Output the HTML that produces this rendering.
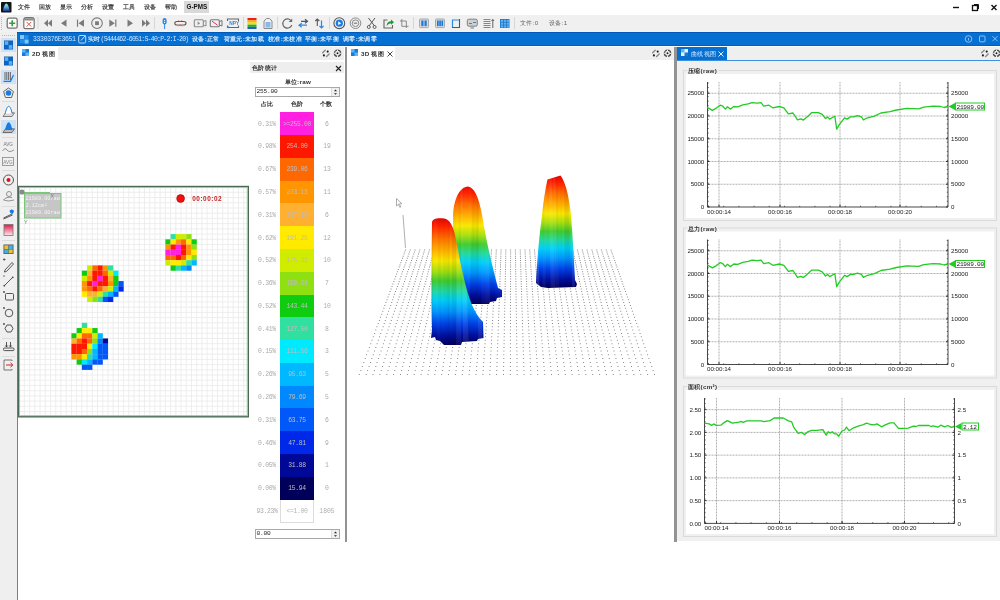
<!DOCTYPE html><html><head><meta charset="utf-8"><style>
*{margin:0;padding:0;box-sizing:border-box}
html,body{width:1000px;height:600px;overflow:hidden;background:#ffffff;font-family:"Liberation Sans",sans-serif;}
.a{position:absolute}
.t{position:absolute;white-space:nowrap;line-height:1;}
#root{position:absolute;left:0;top:0;width:1000px;height:600px;overflow:hidden;background:#ffffff;filter:blur(0.35px);}
</style></head><body><div id="root"><div class="a" style="left:0px;top:0px;width:1000px;height:14px;background:#ffffff"></div><svg class="a" style="left:1px;top:1.5px" width="11" height="11"><rect width="10.5" height="10.5" rx="0.8" fill="#141416"/><defs><linearGradient id="lg" x1="0" y1="0" x2="0" y2="1"><stop offset="0" stop-color="#a0f8a0"/><stop offset="0.45" stop-color="#60b0f0"/><stop offset="1" stop-color="#1a2a80"/></linearGradient></defs><path d="M5.3 1.6 C7 1.8 8.2 6 8.7 9.3 L1.9 9.3 C2.4 6 3.6 1.8 5.3 1.6 Z" fill="url(#lg)"/></svg><div class="t" style="left:18px;top:3.8px;font-size:6.25px;letter-spacing:0.3px;font-weight:600;color:#444">文件</div><div class="t" style="left:39px;top:3.8px;font-size:6.25px;letter-spacing:0.3px;font-weight:600;color:#444">回放</div><div class="t" style="left:60px;top:3.8px;font-size:6.25px;letter-spacing:0.3px;font-weight:600;color:#444">显示</div><div class="t" style="left:81px;top:3.8px;font-size:6.25px;letter-spacing:0.3px;font-weight:600;color:#444">分析</div><div class="t" style="left:102px;top:3.8px;font-size:6.25px;letter-spacing:0.3px;font-weight:600;color:#444">设置</div><div class="t" style="left:123px;top:3.8px;font-size:6.25px;letter-spacing:0.3px;font-weight:600;color:#444">工具</div><div class="t" style="left:144px;top:3.8px;font-size:6.25px;letter-spacing:0.3px;font-weight:600;color:#444">设备</div><div class="t" style="left:165px;top:3.8px;font-size:6.25px;letter-spacing:0.3px;font-weight:600;color:#444">帮助</div><div class="a" style="left:184px;top:1px;width:25px;height:12px;background:#d9d9d9"></div><div class="t" style="left:186.5px;top:4px;font-size:6.3px;font-weight:bold;color:#111">G-PMS</div><svg class="a" style="left:948px;top:2px" width="52" height="11"><path d="M5 5.5h6" stroke="#111" stroke-width="1.4"/><rect x="24.5" y="3.5" width="5" height="5" fill="none" stroke="#111" stroke-width="1.3"/><path d="M26 2.5h4.5v4.5" fill="none" stroke="#111" stroke-width="1"/><path d="M43.5 3l5 5M48.5 3l-5 5" stroke="#111" stroke-width="1.4"/></svg><div class="a" style="left:0px;top:14.5px;width:1000px;height:16.5px;background:#f0f0f0"></div><div class="a" style="left:0px;top:31px;width:1000px;height:1px;background:#f8f0ea"></div><div class="a" style="left:0px;top:32px;width:17px;height:568px;background:#efefef"></div><div class="a" style="left:17px;top:32px;width:983px;height:14px;background:#0670d2;border-top:1px solid #0058b8;border-bottom:1px solid #005ec0"></div><div class="a" style="left:17px;top:46px;width:327px;height:14px;background:#efefef;border-top:1.5px solid #fff"></div><div class="a" style="left:17px;top:46px;width:41px;height:14px;background:#ffffff"></div><div class="a" style="left:17px;top:60px;width:327px;height:481px;background:#ffffff"></div><div class="a" style="left:17px;top:46px;width:1px;height:554px;background:#3a8ee0"></div><div class="a" style="left:344.5px;top:47px;width:2.5px;height:495px;background:#939393"></div><div class="a" style="left:347px;top:46px;width:327px;height:14px;background:#efefef;border-top:1.5px solid #fff"></div><div class="a" style="left:347px;top:46px;width:48px;height:14px;background:#ffffff"></div><div class="a" style="left:347px;top:60px;width:327px;height:481px;background:#ffffff"></div><div class="a" style="left:674px;top:47px;width:2.5px;height:495px;background:#939393"></div><div class="a" style="left:677px;top:46px;width:323px;height:14px;background:#efefef;border-top:1.5px solid #fff"></div><div class="a" style="left:677px;top:47px;width:50px;height:14px;background:#0670d2"></div><div class="a" style="left:677px;top:60px;width:323px;height:1.5px;background:#3d8fe0"></div><div class="a" style="left:677px;top:61px;width:323px;height:480px;background:#f0f0f0"></div><svg class="a" style="left:22px;top:49px" width="8" height="8"><rect width="7" height="7" fill="#1a7ad8"/><rect x="0" y="0" width="3.5" height="3.5" fill="#5ab8f8"/><rect x="3.5" y="3.5" width="3.5" height="3.5" fill="#5ab8f8"/></svg><div class="t" style="left:32px;top:51px;font-size:6.25px;letter-spacing:0.2px;font-weight:600;color:#333">2D 视图</div><svg class="a" style="left:0;top:0" width="260" height="430"><line x1="19.20" y1="186" x2="19.20" y2="417" stroke="#eaeaea" stroke-width="0.8"/><line x1="18" y1="187.10" x2="248" y2="187.10" stroke="#eaeaea" stroke-width="0.8"/><line x1="24.42" y1="186" x2="24.42" y2="417" stroke="#eaeaea" stroke-width="0.8"/><line x1="18" y1="192.32" x2="248" y2="192.32" stroke="#eaeaea" stroke-width="0.8"/><line x1="29.64" y1="186" x2="29.64" y2="417" stroke="#eaeaea" stroke-width="0.8"/><line x1="18" y1="197.54" x2="248" y2="197.54" stroke="#eaeaea" stroke-width="0.8"/><line x1="34.86" y1="186" x2="34.86" y2="417" stroke="#eaeaea" stroke-width="0.8"/><line x1="18" y1="202.76" x2="248" y2="202.76" stroke="#eaeaea" stroke-width="0.8"/><line x1="40.08" y1="186" x2="40.08" y2="417" stroke="#eaeaea" stroke-width="0.8"/><line x1="18" y1="207.98" x2="248" y2="207.98" stroke="#eaeaea" stroke-width="0.8"/><line x1="45.30" y1="186" x2="45.30" y2="417" stroke="#eaeaea" stroke-width="0.8"/><line x1="18" y1="213.20" x2="248" y2="213.20" stroke="#eaeaea" stroke-width="0.8"/><line x1="50.52" y1="186" x2="50.52" y2="417" stroke="#eaeaea" stroke-width="0.8"/><line x1="18" y1="218.42" x2="248" y2="218.42" stroke="#eaeaea" stroke-width="0.8"/><line x1="55.74" y1="186" x2="55.74" y2="417" stroke="#eaeaea" stroke-width="0.8"/><line x1="18" y1="223.64" x2="248" y2="223.64" stroke="#eaeaea" stroke-width="0.8"/><line x1="60.96" y1="186" x2="60.96" y2="417" stroke="#eaeaea" stroke-width="0.8"/><line x1="18" y1="228.86" x2="248" y2="228.86" stroke="#eaeaea" stroke-width="0.8"/><line x1="66.18" y1="186" x2="66.18" y2="417" stroke="#eaeaea" stroke-width="0.8"/><line x1="18" y1="234.08" x2="248" y2="234.08" stroke="#eaeaea" stroke-width="0.8"/><line x1="71.40" y1="186" x2="71.40" y2="417" stroke="#eaeaea" stroke-width="0.8"/><line x1="18" y1="239.30" x2="248" y2="239.30" stroke="#eaeaea" stroke-width="0.8"/><line x1="76.62" y1="186" x2="76.62" y2="417" stroke="#eaeaea" stroke-width="0.8"/><line x1="18" y1="244.52" x2="248" y2="244.52" stroke="#eaeaea" stroke-width="0.8"/><line x1="81.84" y1="186" x2="81.84" y2="417" stroke="#eaeaea" stroke-width="0.8"/><line x1="18" y1="249.74" x2="248" y2="249.74" stroke="#eaeaea" stroke-width="0.8"/><line x1="87.06" y1="186" x2="87.06" y2="417" stroke="#eaeaea" stroke-width="0.8"/><line x1="18" y1="254.96" x2="248" y2="254.96" stroke="#eaeaea" stroke-width="0.8"/><line x1="92.28" y1="186" x2="92.28" y2="417" stroke="#eaeaea" stroke-width="0.8"/><line x1="18" y1="260.18" x2="248" y2="260.18" stroke="#eaeaea" stroke-width="0.8"/><line x1="97.50" y1="186" x2="97.50" y2="417" stroke="#eaeaea" stroke-width="0.8"/><line x1="18" y1="265.40" x2="248" y2="265.40" stroke="#eaeaea" stroke-width="0.8"/><line x1="102.72" y1="186" x2="102.72" y2="417" stroke="#eaeaea" stroke-width="0.8"/><line x1="18" y1="270.62" x2="248" y2="270.62" stroke="#eaeaea" stroke-width="0.8"/><line x1="107.94" y1="186" x2="107.94" y2="417" stroke="#eaeaea" stroke-width="0.8"/><line x1="18" y1="275.84" x2="248" y2="275.84" stroke="#eaeaea" stroke-width="0.8"/><line x1="113.16" y1="186" x2="113.16" y2="417" stroke="#eaeaea" stroke-width="0.8"/><line x1="18" y1="281.06" x2="248" y2="281.06" stroke="#eaeaea" stroke-width="0.8"/><line x1="118.38" y1="186" x2="118.38" y2="417" stroke="#eaeaea" stroke-width="0.8"/><line x1="18" y1="286.28" x2="248" y2="286.28" stroke="#eaeaea" stroke-width="0.8"/><line x1="123.60" y1="186" x2="123.60" y2="417" stroke="#eaeaea" stroke-width="0.8"/><line x1="18" y1="291.50" x2="248" y2="291.50" stroke="#eaeaea" stroke-width="0.8"/><line x1="128.82" y1="186" x2="128.82" y2="417" stroke="#eaeaea" stroke-width="0.8"/><line x1="18" y1="296.72" x2="248" y2="296.72" stroke="#eaeaea" stroke-width="0.8"/><line x1="134.04" y1="186" x2="134.04" y2="417" stroke="#eaeaea" stroke-width="0.8"/><line x1="18" y1="301.94" x2="248" y2="301.94" stroke="#eaeaea" stroke-width="0.8"/><line x1="139.26" y1="186" x2="139.26" y2="417" stroke="#eaeaea" stroke-width="0.8"/><line x1="18" y1="307.16" x2="248" y2="307.16" stroke="#eaeaea" stroke-width="0.8"/><line x1="144.48" y1="186" x2="144.48" y2="417" stroke="#eaeaea" stroke-width="0.8"/><line x1="18" y1="312.38" x2="248" y2="312.38" stroke="#eaeaea" stroke-width="0.8"/><line x1="149.70" y1="186" x2="149.70" y2="417" stroke="#eaeaea" stroke-width="0.8"/><line x1="18" y1="317.60" x2="248" y2="317.60" stroke="#eaeaea" stroke-width="0.8"/><line x1="154.92" y1="186" x2="154.92" y2="417" stroke="#eaeaea" stroke-width="0.8"/><line x1="18" y1="322.82" x2="248" y2="322.82" stroke="#eaeaea" stroke-width="0.8"/><line x1="160.14" y1="186" x2="160.14" y2="417" stroke="#eaeaea" stroke-width="0.8"/><line x1="18" y1="328.04" x2="248" y2="328.04" stroke="#eaeaea" stroke-width="0.8"/><line x1="165.36" y1="186" x2="165.36" y2="417" stroke="#eaeaea" stroke-width="0.8"/><line x1="18" y1="333.26" x2="248" y2="333.26" stroke="#eaeaea" stroke-width="0.8"/><line x1="170.58" y1="186" x2="170.58" y2="417" stroke="#eaeaea" stroke-width="0.8"/><line x1="18" y1="338.48" x2="248" y2="338.48" stroke="#eaeaea" stroke-width="0.8"/><line x1="175.80" y1="186" x2="175.80" y2="417" stroke="#eaeaea" stroke-width="0.8"/><line x1="18" y1="343.70" x2="248" y2="343.70" stroke="#eaeaea" stroke-width="0.8"/><line x1="181.02" y1="186" x2="181.02" y2="417" stroke="#eaeaea" stroke-width="0.8"/><line x1="18" y1="348.92" x2="248" y2="348.92" stroke="#eaeaea" stroke-width="0.8"/><line x1="186.24" y1="186" x2="186.24" y2="417" stroke="#eaeaea" stroke-width="0.8"/><line x1="18" y1="354.14" x2="248" y2="354.14" stroke="#eaeaea" stroke-width="0.8"/><line x1="191.46" y1="186" x2="191.46" y2="417" stroke="#eaeaea" stroke-width="0.8"/><line x1="18" y1="359.36" x2="248" y2="359.36" stroke="#eaeaea" stroke-width="0.8"/><line x1="196.68" y1="186" x2="196.68" y2="417" stroke="#eaeaea" stroke-width="0.8"/><line x1="18" y1="364.58" x2="248" y2="364.58" stroke="#eaeaea" stroke-width="0.8"/><line x1="201.90" y1="186" x2="201.90" y2="417" stroke="#eaeaea" stroke-width="0.8"/><line x1="18" y1="369.80" x2="248" y2="369.80" stroke="#eaeaea" stroke-width="0.8"/><line x1="207.12" y1="186" x2="207.12" y2="417" stroke="#eaeaea" stroke-width="0.8"/><line x1="18" y1="375.02" x2="248" y2="375.02" stroke="#eaeaea" stroke-width="0.8"/><line x1="212.34" y1="186" x2="212.34" y2="417" stroke="#eaeaea" stroke-width="0.8"/><line x1="18" y1="380.24" x2="248" y2="380.24" stroke="#eaeaea" stroke-width="0.8"/><line x1="217.56" y1="186" x2="217.56" y2="417" stroke="#eaeaea" stroke-width="0.8"/><line x1="18" y1="385.46" x2="248" y2="385.46" stroke="#eaeaea" stroke-width="0.8"/><line x1="222.78" y1="186" x2="222.78" y2="417" stroke="#eaeaea" stroke-width="0.8"/><line x1="18" y1="390.68" x2="248" y2="390.68" stroke="#eaeaea" stroke-width="0.8"/><line x1="228.00" y1="186" x2="228.00" y2="417" stroke="#eaeaea" stroke-width="0.8"/><line x1="18" y1="395.90" x2="248" y2="395.90" stroke="#eaeaea" stroke-width="0.8"/><line x1="233.22" y1="186" x2="233.22" y2="417" stroke="#eaeaea" stroke-width="0.8"/><line x1="18" y1="401.12" x2="248" y2="401.12" stroke="#eaeaea" stroke-width="0.8"/><line x1="238.44" y1="186" x2="238.44" y2="417" stroke="#eaeaea" stroke-width="0.8"/><line x1="18" y1="406.34" x2="248" y2="406.34" stroke="#eaeaea" stroke-width="0.8"/><line x1="243.66" y1="186" x2="243.66" y2="417" stroke="#eaeaea" stroke-width="0.8"/><line x1="18" y1="411.56" x2="248" y2="411.56" stroke="#eaeaea" stroke-width="0.8"/><line x1="18" y1="416.78" x2="248" y2="416.78" stroke="#eaeaea" stroke-width="0.8"/><rect x="170.58" y="234.08" width="5.32" height="5.32" fill="#30e0a0"/><rect x="175.80" y="234.08" width="5.32" height="5.32" fill="#d0ec00"/><rect x="181.02" y="234.08" width="5.32" height="5.32" fill="#d0ec00"/><rect x="186.24" y="234.08" width="5.32" height="5.32" fill="#8fe010"/><rect x="165.36" y="239.30" width="5.32" height="5.32" fill="#10cc10"/><rect x="170.58" y="239.30" width="5.32" height="5.32" fill="#ffea00"/><rect x="175.80" y="239.30" width="5.32" height="5.32" fill="#ff9500"/><rect x="181.02" y="239.30" width="5.32" height="5.32" fill="#ff6800"/><rect x="186.24" y="239.30" width="5.32" height="5.32" fill="#ffea00"/><rect x="191.46" y="239.30" width="5.32" height="5.32" fill="#10cc10"/><rect x="165.36" y="244.52" width="5.32" height="5.32" fill="#ff9500"/><rect x="170.58" y="244.52" width="5.32" height="5.32" fill="#ff1800"/><rect x="175.80" y="244.52" width="5.32" height="5.32" fill="#ff20e0"/><rect x="181.02" y="244.52" width="5.32" height="5.32" fill="#ff1800"/><rect x="186.24" y="244.52" width="5.32" height="5.32" fill="#ff9500"/><rect x="191.46" y="244.52" width="5.32" height="5.32" fill="#8fe010"/><rect x="165.36" y="249.74" width="5.32" height="5.32" fill="#ff20e0"/><rect x="170.58" y="249.74" width="5.32" height="5.32" fill="#ff20e0"/><rect x="175.80" y="249.74" width="5.32" height="5.32" fill="#ff20e0"/><rect x="181.02" y="249.74" width="5.32" height="5.32" fill="#ff1800"/><rect x="186.24" y="249.74" width="5.32" height="5.32" fill="#ff9500"/><rect x="191.46" y="249.74" width="5.32" height="5.32" fill="#ffea00"/><rect x="165.36" y="254.96" width="5.32" height="5.32" fill="#ff6800"/><rect x="170.58" y="254.96" width="5.32" height="5.32" fill="#ff6800"/><rect x="175.80" y="254.96" width="5.32" height="5.32" fill="#ff1800"/><rect x="181.02" y="254.96" width="5.32" height="5.32" fill="#ff6800"/><rect x="186.24" y="254.96" width="5.32" height="5.32" fill="#ffea00"/><rect x="191.46" y="254.96" width="5.32" height="5.32" fill="#8fe010"/><rect x="165.36" y="260.18" width="5.32" height="5.32" fill="#d0ec00"/><rect x="170.58" y="260.18" width="5.32" height="5.32" fill="#ffea00"/><rect x="175.80" y="260.18" width="5.32" height="5.32" fill="#ffea00"/><rect x="181.02" y="260.18" width="5.32" height="5.32" fill="#d0ec00"/><rect x="186.24" y="260.18" width="5.32" height="5.32" fill="#30e0a0"/><rect x="191.46" y="260.18" width="5.32" height="5.32" fill="#00b8ff"/><rect x="170.58" y="265.40" width="5.32" height="5.32" fill="#10cc10"/><rect x="175.80" y="265.40" width="5.32" height="5.32" fill="#30e0a0"/><rect x="181.02" y="265.40" width="5.32" height="5.32" fill="#00b8ff"/><rect x="186.24" y="265.40" width="5.32" height="5.32" fill="#0088ff"/><rect x="87.06" y="265.40" width="5.32" height="5.32" fill="#d0ec00"/><rect x="92.28" y="265.40" width="5.32" height="5.32" fill="#ff6800"/><rect x="97.50" y="265.40" width="5.32" height="5.32" fill="#ff1800"/><rect x="102.72" y="265.40" width="5.32" height="5.32" fill="#ff9500"/><rect x="107.94" y="265.40" width="5.32" height="5.32" fill="#30e0a0"/><rect x="81.84" y="270.62" width="5.32" height="5.32" fill="#10cc10"/><rect x="87.06" y="270.62" width="5.32" height="5.32" fill="#ffb030"/><rect x="92.28" y="270.62" width="5.32" height="5.32" fill="#ff1800"/><rect x="97.50" y="270.62" width="5.32" height="5.32" fill="#ff1800"/><rect x="102.72" y="270.62" width="5.32" height="5.32" fill="#ff6800"/><rect x="107.94" y="270.62" width="5.32" height="5.32" fill="#d0ec00"/><rect x="113.16" y="270.62" width="5.32" height="5.32" fill="#00eaff"/><rect x="81.84" y="275.84" width="5.32" height="5.32" fill="#d0ec00"/><rect x="87.06" y="275.84" width="5.32" height="5.32" fill="#ff9500"/><rect x="92.28" y="275.84" width="5.32" height="5.32" fill="#ff1800"/><rect x="97.50" y="275.84" width="5.32" height="5.32" fill="#ff20e0"/><rect x="102.72" y="275.84" width="5.32" height="5.32" fill="#ff1800"/><rect x="107.94" y="275.84" width="5.32" height="5.32" fill="#ffb030"/><rect x="113.16" y="275.84" width="5.32" height="5.32" fill="#10cc10"/><rect x="81.84" y="281.06" width="5.32" height="5.32" fill="#ff9500"/><rect x="87.06" y="281.06" width="5.32" height="5.32" fill="#ff1800"/><rect x="92.28" y="281.06" width="5.32" height="5.32" fill="#ff20e0"/><rect x="97.50" y="281.06" width="5.32" height="5.32" fill="#ff1800"/><rect x="102.72" y="281.06" width="5.32" height="5.32" fill="#ff1800"/><rect x="107.94" y="281.06" width="5.32" height="5.32" fill="#ff9500"/><rect x="113.16" y="281.06" width="5.32" height="5.32" fill="#10cc10"/><rect x="118.38" y="281.06" width="5.32" height="5.32" fill="#0058f8"/><rect x="81.84" y="286.28" width="5.32" height="5.32" fill="#ff9500"/><rect x="87.06" y="286.28" width="5.32" height="5.32" fill="#ff6800"/><rect x="92.28" y="286.28" width="5.32" height="5.32" fill="#ff1800"/><rect x="97.50" y="286.28" width="5.32" height="5.32" fill="#ff6800"/><rect x="102.72" y="286.28" width="5.32" height="5.32" fill="#ffb030"/><rect x="107.94" y="286.28" width="5.32" height="5.32" fill="#d0ec00"/><rect x="113.16" y="286.28" width="5.32" height="5.32" fill="#00b8ff"/><rect x="118.38" y="286.28" width="5.32" height="5.32" fill="#0028e8"/><rect x="81.84" y="291.50" width="5.32" height="5.32" fill="#ffea00"/><rect x="87.06" y="291.50" width="5.32" height="5.32" fill="#ffb030"/><rect x="92.28" y="291.50" width="5.32" height="5.32" fill="#ffb030"/><rect x="97.50" y="291.50" width="5.32" height="5.32" fill="#d0ec00"/><rect x="102.72" y="291.50" width="5.32" height="5.32" fill="#30e0a0"/><rect x="107.94" y="291.50" width="5.32" height="5.32" fill="#00b8ff"/><rect x="113.16" y="291.50" width="5.32" height="5.32" fill="#0058f8"/><rect x="87.06" y="296.72" width="5.32" height="5.32" fill="#d0ec00"/><rect x="92.28" y="296.72" width="5.32" height="5.32" fill="#8fe010"/><rect x="97.50" y="296.72" width="5.32" height="5.32" fill="#30e0a0"/><rect x="102.72" y="296.72" width="5.32" height="5.32" fill="#0058f8"/><rect x="107.94" y="296.72" width="5.32" height="5.32" fill="#0028e8"/><rect x="81.84" y="322.82" width="5.32" height="5.32" fill="#30e0a0"/><rect x="76.62" y="328.04" width="5.32" height="5.32" fill="#10cc10"/><rect x="81.84" y="328.04" width="5.32" height="5.32" fill="#ffea00"/><rect x="87.06" y="328.04" width="5.32" height="5.32" fill="#ffea00"/><rect x="92.28" y="328.04" width="5.32" height="5.32" fill="#10cc10"/><rect x="71.40" y="333.26" width="5.32" height="5.32" fill="#10cc10"/><rect x="76.62" y="333.26" width="5.32" height="5.32" fill="#ffea00"/><rect x="81.84" y="333.26" width="5.32" height="5.32" fill="#ff6800"/><rect x="87.06" y="333.26" width="5.32" height="5.32" fill="#ff6800"/><rect x="92.28" y="333.26" width="5.32" height="5.32" fill="#d0ec00"/><rect x="97.50" y="333.26" width="5.32" height="5.32" fill="#00b8ff"/><rect x="71.40" y="338.48" width="5.32" height="5.32" fill="#ffb030"/><rect x="76.62" y="338.48" width="5.32" height="5.32" fill="#ff6800"/><rect x="81.84" y="338.48" width="5.32" height="5.32" fill="#ff1800"/><rect x="87.06" y="338.48" width="5.32" height="5.32" fill="#ff6800"/><rect x="92.28" y="338.48" width="5.32" height="5.32" fill="#8fe010"/><rect x="97.50" y="338.48" width="5.32" height="5.32" fill="#0088ff"/><rect x="102.72" y="338.48" width="5.32" height="5.32" fill="#000898"/><rect x="71.40" y="343.70" width="5.32" height="5.32" fill="#ff1800"/><rect x="76.62" y="343.70" width="5.32" height="5.32" fill="#ff1800"/><rect x="81.84" y="343.70" width="5.32" height="5.32" fill="#ff1800"/><rect x="87.06" y="343.70" width="5.32" height="5.32" fill="#ffea00"/><rect x="92.28" y="343.70" width="5.32" height="5.32" fill="#00eaff"/><rect x="97.50" y="343.70" width="5.32" height="5.32" fill="#0058f8"/><rect x="102.72" y="343.70" width="5.32" height="5.32" fill="#0058f8"/><rect x="71.40" y="348.92" width="5.32" height="5.32" fill="#ff1800"/><rect x="76.62" y="348.92" width="5.32" height="5.32" fill="#ff1800"/><rect x="81.84" y="348.92" width="5.32" height="5.32" fill="#ff6800"/><rect x="87.06" y="348.92" width="5.32" height="5.32" fill="#8fe010"/><rect x="92.28" y="348.92" width="5.32" height="5.32" fill="#00b8ff"/><rect x="97.50" y="348.92" width="5.32" height="5.32" fill="#0058f8"/><rect x="102.72" y="348.92" width="5.32" height="5.32" fill="#0058f8"/><rect x="71.40" y="354.14" width="5.32" height="5.32" fill="#ff9500"/><rect x="76.62" y="354.14" width="5.32" height="5.32" fill="#ff9500"/><rect x="81.84" y="354.14" width="5.32" height="5.32" fill="#ffea00"/><rect x="87.06" y="354.14" width="5.32" height="5.32" fill="#30e0a0"/><rect x="92.28" y="354.14" width="5.32" height="5.32" fill="#00b8ff"/><rect x="97.50" y="354.14" width="5.32" height="5.32" fill="#0058f8"/><rect x="102.72" y="354.14" width="5.32" height="5.32" fill="#0058f8"/><rect x="76.62" y="359.36" width="5.32" height="5.32" fill="#10cc10"/><rect x="81.84" y="359.36" width="5.32" height="5.32" fill="#00eaff"/><rect x="87.06" y="359.36" width="5.32" height="5.32" fill="#00b8ff"/><rect x="92.28" y="359.36" width="5.32" height="5.32" fill="#0058f8"/><rect x="97.50" y="359.36" width="5.32" height="5.32" fill="#0058f8"/><rect x="81.84" y="364.58" width="5.32" height="5.32" fill="#0058f8"/><rect x="87.06" y="364.58" width="5.32" height="5.32" fill="#0058f8"/><rect x="18.5" y="186.5" width="229.8" height="230.3" fill="none" stroke="#4a6a55" stroke-width="1.4"/><rect x="19.6" y="187.6" width="227.6" height="228" fill="none" stroke="#80d890" stroke-width="0.9"/><rect x="24.5" y="193.5" width="36.5" height="24.5" fill="#c6c6c6" stroke="#78c878" stroke-width="1"/><line x1="22" y1="192.5" x2="50" y2="192.5" stroke="#78c878" stroke-width="1"/><circle cx="22" cy="192" r="2.6" fill="#8a8a8a"/><text x="25.5" y="199.5" font-family="Liberation Mono" font-size="5.2" fill="#f4f4f4">21989.00raw</text><text x="25.5" y="206.7" font-family="Liberation Mono" font-size="5.2" fill="#f4f4f4">2.12cm²</text><text x="25.5" y="213.9" font-family="Liberation Mono" font-size="5.2" fill="#f4f4f4">21989.00raw</text><text x="50.5" y="198" font-family="Liberation Sans" font-size="5" fill="#777">X</text><text x="24" y="224" font-family="Liberation Sans" font-size="5.5" fill="#777">Y</text><circle cx="180.6" cy="198.5" r="3.9" fill="#f01010" stroke="#a00000" stroke-width="0.6"/><text x="192.2" y="201.3" font-family="Liberation Sans" font-size="6.4" font-weight="bold" fill="#c02020" letter-spacing="0.55">00:00:02</text></svg><svg class="a" style="left:322px;top:48px" width="22" height="11"><path d="M0.6 4.8 L3.2 2.2 M4.6 8.6 L7.2 6" stroke="#8c8c8c" stroke-width="1.4" stroke-linecap="round"/><circle cx="5.7" cy="3.6" r="1.05" fill="#1a1a1a"/><circle cx="1.9" cy="7.4" r="1.05" fill="#1a1a1a"/><circle cx="15.5" cy="5.3" r="3.1" fill="none" stroke="#4a4a4a" stroke-width="1.3"/><path d="M15.5 1.6 V3.3 M15.5 7.3 V9 M11.8 5.3 H13.5 M17.5 5.3 H19.2" stroke="#efefef" stroke-width="1"/><circle cx="15.5" cy="5.3" r="0.95" fill="#1a1a1a"/></svg><div class="a" style="left:250px;top:62px;width:94px;height:11px;background:#eeeeee"></div><div class="t" style="left:252px;top:64.5px;font-size:6.25px;letter-spacing:0.3px;font-weight:600;color:#333">色阶统计</div><svg class="a" style="left:335px;top:65px" width="7" height="7"><path d="M1 1l5 5M6 1l-5 5" stroke="#222" stroke-width="1.1"/></svg><div class="t" style="left:284.5px;top:78.5px;font-size:6.25px;letter-spacing:0.3px;font-weight:600;color:#333">单位:raw</div><div class="a" style="left:255px;top:87px;width:85px;height:10px;border:1px solid #a8a8a8;background:#fff"></div><div class="a" style="left:331px;top:88px;width:8px;height:8px;background:#f0f0f0;border-left:1px solid #ddd"></div><svg class="a" style="left:332px;top:88px" width="7" height="8"><path d="M2 3.2L3.5 1.6L5 3.2Z M2 5.2L3.5 6.8L5 5.2Z" fill="#222"/></svg><div class="t" style="left:256.5px;top:89.3px;font-size:6.2px;font-family:'Liberation Mono';color:#222;letter-spacing:-0.2px">255.00</div><div class="t" style="left:261px;top:100.5px;font-size:6.25px;letter-spacing:0.3px;font-weight:600;color:#333">占比</div><div class="t" style="left:291px;top:100.5px;font-size:6.25px;letter-spacing:0.3px;font-weight:600;color:#333">色阶</div><div class="t" style="left:320px;top:100.5px;font-size:6.25px;letter-spacing:0.3px;font-weight:600;color:#333">个数</div><div class="a" style="left:280px;top:112.20px;width:34px;height:22.99px;background:#ff20e0"></div><div class="t" style="left:249px;width:36px;top:121.59px;text-align:center;font-family:'Liberation Mono';font-size:6.4px;color:#ababab;letter-spacing:-0.25px">0.31%</div><div class="t" style="left:279px;width:36px;top:121.59px;text-align:center;font-family:'Liberation Mono';font-size:6.4px;color:#bdbdbd;letter-spacing:-0.35px">&gt;=255.00</div><div class="t" style="left:314px;width:26px;top:121.59px;text-align:center;font-family:'Liberation Mono';font-size:6.4px;color:#ababab">6</div><div class="a" style="left:280px;top:134.99px;width:34px;height:22.99px;background:#ff1800"></div><div class="t" style="left:249px;width:36px;top:144.39px;text-align:center;font-family:'Liberation Mono';font-size:6.4px;color:#ababab;letter-spacing:-0.25px">0.98%</div><div class="t" style="left:279px;width:36px;top:144.39px;text-align:center;font-family:'Liberation Mono';font-size:6.4px;color:#bdbdbd;letter-spacing:-0.35px">254.00</div><div class="t" style="left:314px;width:26px;top:144.39px;text-align:center;font-family:'Liberation Mono';font-size:6.4px;color:#ababab">19</div><div class="a" style="left:280px;top:157.78px;width:34px;height:22.99px;background:#ff6800"></div><div class="t" style="left:249px;width:36px;top:167.18px;text-align:center;font-family:'Liberation Mono';font-size:6.4px;color:#ababab;letter-spacing:-0.25px">0.67%</div><div class="t" style="left:279px;width:36px;top:167.18px;text-align:center;font-family:'Liberation Mono';font-size:6.4px;color:#bdbdbd;letter-spacing:-0.35px">239.06</div><div class="t" style="left:314px;width:26px;top:167.18px;text-align:center;font-family:'Liberation Mono';font-size:6.4px;color:#ababab">13</div><div class="a" style="left:280px;top:180.57px;width:34px;height:22.99px;background:#ff9500"></div><div class="t" style="left:249px;width:36px;top:189.97px;text-align:center;font-family:'Liberation Mono';font-size:6.4px;color:#ababab;letter-spacing:-0.25px">0.57%</div><div class="t" style="left:279px;width:36px;top:189.97px;text-align:center;font-family:'Liberation Mono';font-size:6.4px;color:#bdbdbd;letter-spacing:-0.35px">223.13</div><div class="t" style="left:314px;width:26px;top:189.97px;text-align:center;font-family:'Liberation Mono';font-size:6.4px;color:#ababab">11</div><div class="a" style="left:280px;top:203.36px;width:34px;height:22.99px;background:#ffb030"></div><div class="t" style="left:249px;width:36px;top:212.76px;text-align:center;font-family:'Liberation Mono';font-size:6.4px;color:#ababab;letter-spacing:-0.25px">0.31%</div><div class="t" style="left:279px;width:36px;top:212.76px;text-align:center;font-family:'Liberation Mono';font-size:6.4px;color:#bdbdbd;letter-spacing:-0.35px">207.19</div><div class="t" style="left:314px;width:26px;top:212.76px;text-align:center;font-family:'Liberation Mono';font-size:6.4px;color:#ababab">6</div><div class="a" style="left:280px;top:226.15px;width:34px;height:22.99px;background:#ffea00"></div><div class="t" style="left:249px;width:36px;top:235.54px;text-align:center;font-family:'Liberation Mono';font-size:6.4px;color:#ababab;letter-spacing:-0.25px">0.62%</div><div class="t" style="left:279px;width:36px;top:235.54px;text-align:center;font-family:'Liberation Mono';font-size:6.4px;color:#bdbdbd;letter-spacing:-0.35px">191.25</div><div class="t" style="left:314px;width:26px;top:235.54px;text-align:center;font-family:'Liberation Mono';font-size:6.4px;color:#ababab">12</div><div class="a" style="left:280px;top:248.94px;width:34px;height:22.99px;background:#d0ec00"></div><div class="t" style="left:249px;width:36px;top:258.33px;text-align:center;font-family:'Liberation Mono';font-size:6.4px;color:#ababab;letter-spacing:-0.25px">0.52%</div><div class="t" style="left:279px;width:36px;top:258.33px;text-align:center;font-family:'Liberation Mono';font-size:6.4px;color:#bdbdbd;letter-spacing:-0.35px">175.31</div><div class="t" style="left:314px;width:26px;top:258.33px;text-align:center;font-family:'Liberation Mono';font-size:6.4px;color:#ababab">10</div><div class="a" style="left:280px;top:271.73px;width:34px;height:22.99px;background:#8fe010"></div><div class="t" style="left:249px;width:36px;top:281.12px;text-align:center;font-family:'Liberation Mono';font-size:6.4px;color:#ababab;letter-spacing:-0.25px">0.36%</div><div class="t" style="left:279px;width:36px;top:281.12px;text-align:center;font-family:'Liberation Mono';font-size:6.4px;color:#bdbdbd;letter-spacing:-0.35px">159.38</div><div class="t" style="left:314px;width:26px;top:281.12px;text-align:center;font-family:'Liberation Mono';font-size:6.4px;color:#ababab">7</div><div class="a" style="left:280px;top:294.52px;width:34px;height:22.99px;background:#10cc10"></div><div class="t" style="left:249px;width:36px;top:303.91px;text-align:center;font-family:'Liberation Mono';font-size:6.4px;color:#ababab;letter-spacing:-0.25px">0.52%</div><div class="t" style="left:279px;width:36px;top:303.91px;text-align:center;font-family:'Liberation Mono';font-size:6.4px;color:#bdbdbd;letter-spacing:-0.35px">143.44</div><div class="t" style="left:314px;width:26px;top:303.91px;text-align:center;font-family:'Liberation Mono';font-size:6.4px;color:#ababab">10</div><div class="a" style="left:280px;top:317.31px;width:34px;height:22.99px;background:#30e0a0"></div><div class="t" style="left:249px;width:36px;top:326.70px;text-align:center;font-family:'Liberation Mono';font-size:6.4px;color:#ababab;letter-spacing:-0.25px">0.41%</div><div class="t" style="left:279px;width:36px;top:326.70px;text-align:center;font-family:'Liberation Mono';font-size:6.4px;color:#bdbdbd;letter-spacing:-0.35px">127.50</div><div class="t" style="left:314px;width:26px;top:326.70px;text-align:center;font-family:'Liberation Mono';font-size:6.4px;color:#ababab">8</div><div class="a" style="left:280px;top:340.10px;width:34px;height:22.99px;background:#00eaff"></div><div class="t" style="left:249px;width:36px;top:349.49px;text-align:center;font-family:'Liberation Mono';font-size:6.4px;color:#ababab;letter-spacing:-0.25px">0.15%</div><div class="t" style="left:279px;width:36px;top:349.49px;text-align:center;font-family:'Liberation Mono';font-size:6.4px;color:#bdbdbd;letter-spacing:-0.35px">111.56</div><div class="t" style="left:314px;width:26px;top:349.49px;text-align:center;font-family:'Liberation Mono';font-size:6.4px;color:#ababab">3</div><div class="a" style="left:280px;top:362.89px;width:34px;height:22.99px;background:#00b8ff"></div><div class="t" style="left:249px;width:36px;top:372.28px;text-align:center;font-family:'Liberation Mono';font-size:6.4px;color:#ababab;letter-spacing:-0.25px">0.26%</div><div class="t" style="left:279px;width:36px;top:372.28px;text-align:center;font-family:'Liberation Mono';font-size:6.4px;color:#bdbdbd;letter-spacing:-0.35px">95.63</div><div class="t" style="left:314px;width:26px;top:372.28px;text-align:center;font-family:'Liberation Mono';font-size:6.4px;color:#ababab">5</div><div class="a" style="left:280px;top:385.68px;width:34px;height:22.99px;background:#0088ff"></div><div class="t" style="left:249px;width:36px;top:395.07px;text-align:center;font-family:'Liberation Mono';font-size:6.4px;color:#ababab;letter-spacing:-0.25px">0.26%</div><div class="t" style="left:279px;width:36px;top:395.07px;text-align:center;font-family:'Liberation Mono';font-size:6.4px;color:#bdbdbd;letter-spacing:-0.35px">79.69</div><div class="t" style="left:314px;width:26px;top:395.07px;text-align:center;font-family:'Liberation Mono';font-size:6.4px;color:#ababab">5</div><div class="a" style="left:280px;top:408.47px;width:34px;height:22.99px;background:#0058f8"></div><div class="t" style="left:249px;width:36px;top:417.86px;text-align:center;font-family:'Liberation Mono';font-size:6.4px;color:#ababab;letter-spacing:-0.25px">0.31%</div><div class="t" style="left:279px;width:36px;top:417.86px;text-align:center;font-family:'Liberation Mono';font-size:6.4px;color:#bdbdbd;letter-spacing:-0.35px">63.75</div><div class="t" style="left:314px;width:26px;top:417.86px;text-align:center;font-family:'Liberation Mono';font-size:6.4px;color:#ababab">6</div><div class="a" style="left:280px;top:431.26px;width:34px;height:22.99px;background:#0028e8"></div><div class="t" style="left:249px;width:36px;top:440.65px;text-align:center;font-family:'Liberation Mono';font-size:6.4px;color:#ababab;letter-spacing:-0.25px">0.46%</div><div class="t" style="left:279px;width:36px;top:440.65px;text-align:center;font-family:'Liberation Mono';font-size:6.4px;color:#bdbdbd;letter-spacing:-0.35px">47.81</div><div class="t" style="left:314px;width:26px;top:440.65px;text-align:center;font-family:'Liberation Mono';font-size:6.4px;color:#ababab">9</div><div class="a" style="left:280px;top:454.05px;width:34px;height:22.99px;background:#000898"></div><div class="t" style="left:249px;width:36px;top:463.44px;text-align:center;font-family:'Liberation Mono';font-size:6.4px;color:#ababab;letter-spacing:-0.25px">0.05%</div><div class="t" style="left:279px;width:36px;top:463.44px;text-align:center;font-family:'Liberation Mono';font-size:6.4px;color:#bdbdbd;letter-spacing:-0.35px">31.88</div><div class="t" style="left:314px;width:26px;top:463.44px;text-align:center;font-family:'Liberation Mono';font-size:6.4px;color:#ababab">1</div><div class="a" style="left:280px;top:476.84px;width:34px;height:22.99px;background:#00005a"></div><div class="t" style="left:249px;width:36px;top:486.23px;text-align:center;font-family:'Liberation Mono';font-size:6.4px;color:#ababab;letter-spacing:-0.25px">0.00%</div><div class="t" style="left:279px;width:36px;top:486.23px;text-align:center;font-family:'Liberation Mono';font-size:6.4px;color:#bdbdbd;letter-spacing:-0.35px">15.94</div><div class="t" style="left:314px;width:26px;top:486.23px;text-align:center;font-family:'Liberation Mono';font-size:6.4px;color:#ababab">0</div><div class="a" style="left:280px;top:499.63px;width:34px;height:23.5px;background:#fff;border:1px solid #dcdcdc;border-top:none"></div><div class="t" style="left:249px;width:36px;top:509.02px;text-align:center;font-family:'Liberation Mono';font-size:6.4px;color:#ababab;letter-spacing:-0.35px">93.23%</div><div class="t" style="left:279px;width:36px;top:509.02px;text-align:center;font-family:'Liberation Mono';font-size:6.4px;color:#b4b4b4;letter-spacing:-0.35px">&lt;=1.00</div><div class="t" style="left:314px;width:26px;top:509.02px;text-align:center;font-family:'Liberation Mono';font-size:6.4px;color:#ababab">1805</div><div class="a" style="left:255px;top:529px;width:85px;height:10px;border:1px solid #a8a8a8;background:#fff"></div><div class="a" style="left:331px;top:530px;width:8px;height:8px;background:#f0f0f0;border-left:1px solid #ddd"></div><svg class="a" style="left:332px;top:530px" width="7" height="8"><path d="M2 3.2L3.5 1.6L5 3.2Z M2 5.2L3.5 6.8L5 5.2Z" fill="#222"/></svg><div class="t" style="left:256.5px;top:531.3px;font-size:6.2px;font-family:'Liberation Mono';color:#222;letter-spacing:-0.2px">0.00</div><svg class="a" style="left:351px;top:49px" width="8" height="8"><rect width="7" height="7" fill="#1a7ad8"/><rect x="0" y="0" width="3.5" height="3.5" fill="#5ab8f8"/><rect x="3.5" y="3.5" width="3.5" height="3.5" fill="#5ab8f8"/></svg><div class="t" style="left:361px;top:51px;font-size:6.25px;letter-spacing:0.2px;font-weight:600;color:#333">3D 视图</div><svg class="a" style="left:386px;top:50px" width="8" height="8"><path d="M1.5 1.5l5 5M6.5 1.5l-5 5" stroke="#333" stroke-width="0.9"/></svg><svg class="a" style="left:652px;top:48px" width="22" height="11"><path d="M0.6 4.8 L3.2 2.2 M4.6 8.6 L7.2 6" stroke="#8c8c8c" stroke-width="1.4" stroke-linecap="round"/><circle cx="5.7" cy="3.6" r="1.05" fill="#1a1a1a"/><circle cx="1.9" cy="7.4" r="1.05" fill="#1a1a1a"/><circle cx="15.5" cy="5.3" r="3.1" fill="none" stroke="#4a4a4a" stroke-width="1.3"/><path d="M15.5 1.6 V3.3 M15.5 7.3 V9 M11.8 5.3 H13.5 M17.5 5.3 H19.2" stroke="#efefef" stroke-width="1"/><circle cx="15.5" cy="5.3" r="0.95" fill="#1a1a1a"/></svg><svg class="a" style="left:347px;top:60px" width="327" height="481" viewBox="347 60 327 481"><path d="M405.0 249.5h1v1h-1zM409.8 249.5h1v1h-1zM414.6 249.5h1v1h-1zM419.3 249.5h1v1h-1zM424.1 249.5h1v1h-1zM428.9 249.5h1v1h-1zM433.7 249.5h1v1h-1zM438.5 249.5h1v1h-1zM443.2 249.5h1v1h-1zM448.0 249.5h1v1h-1zM452.8 249.5h1v1h-1zM457.6 249.5h1v1h-1zM462.3 249.5h1v1h-1zM467.1 249.5h1v1h-1zM471.9 249.5h1v1h-1zM476.7 249.5h1v1h-1zM481.5 249.5h1v1h-1zM486.2 249.5h1v1h-1zM491.0 249.5h1v1h-1zM495.8 249.5h1v1h-1zM500.6 249.5h1v1h-1zM505.4 249.5h1v1h-1zM510.1 249.5h1v1h-1zM514.9 249.5h1v1h-1zM519.7 249.5h1v1h-1zM524.5 249.5h1v1h-1zM529.3 249.5h1v1h-1zM534.0 249.5h1v1h-1zM538.8 249.5h1v1h-1zM543.6 249.5h1v1h-1zM548.4 249.5h1v1h-1zM553.2 249.5h1v1h-1zM557.9 249.5h1v1h-1zM562.7 249.5h1v1h-1zM567.5 249.5h1v1h-1zM572.3 249.5h1v1h-1zM577.0 249.5h1v1h-1zM581.8 249.5h1v1h-1zM586.6 249.5h1v1h-1zM591.4 249.5h1v1h-1zM596.2 249.5h1v1h-1zM600.9 249.5h1v1h-1zM605.7 249.5h1v1h-1zM610.5 249.5h1v1h-1zM404.2 251.5h1v1h-1zM409.1 251.5h1v1h-1zM413.9 251.5h1v1h-1zM418.7 251.5h1v1h-1zM423.5 251.5h1v1h-1zM428.3 251.5h1v1h-1zM433.1 251.5h1v1h-1zM437.9 251.5h1v1h-1zM442.8 251.5h1v1h-1zM447.6 251.5h1v1h-1zM452.4 251.5h1v1h-1zM457.2 251.5h1v1h-1zM462.0 251.5h1v1h-1zM466.8 251.5h1v1h-1zM471.6 251.5h1v1h-1zM476.4 251.5h1v1h-1zM481.3 251.5h1v1h-1zM486.1 251.5h1v1h-1zM490.9 251.5h1v1h-1zM495.7 251.5h1v1h-1zM500.5 251.5h1v1h-1zM505.3 251.5h1v1h-1zM510.1 251.5h1v1h-1zM514.9 251.5h1v1h-1zM519.8 251.5h1v1h-1zM524.6 251.5h1v1h-1zM529.4 251.5h1v1h-1zM534.2 251.5h1v1h-1zM539.0 251.5h1v1h-1zM543.8 251.5h1v1h-1zM548.6 251.5h1v1h-1zM553.5 251.5h1v1h-1zM558.3 251.5h1v1h-1zM563.1 251.5h1v1h-1zM567.9 251.5h1v1h-1zM572.7 251.5h1v1h-1zM577.5 251.5h1v1h-1zM582.3 251.5h1v1h-1zM587.1 251.5h1v1h-1zM592.0 251.5h1v1h-1zM596.8 251.5h1v1h-1zM601.6 251.5h1v1h-1zM606.4 251.5h1v1h-1zM611.2 251.5h1v1h-1zM403.5 253.6h1v1h-1zM408.3 253.6h1v1h-1zM413.2 253.6h1v1h-1zM418.0 253.6h1v1h-1zM422.9 253.6h1v1h-1zM427.7 253.6h1v1h-1zM432.6 253.6h1v1h-1zM437.4 253.6h1v1h-1zM442.3 253.6h1v1h-1zM447.1 253.6h1v1h-1zM452.0 253.6h1v1h-1zM456.8 253.6h1v1h-1zM461.7 253.6h1v1h-1zM466.5 253.6h1v1h-1zM471.3 253.6h1v1h-1zM476.2 253.6h1v1h-1zM481.0 253.6h1v1h-1zM485.9 253.6h1v1h-1zM490.7 253.6h1v1h-1zM495.6 253.6h1v1h-1zM500.4 253.6h1v1h-1zM505.3 253.6h1v1h-1zM510.1 253.6h1v1h-1zM515.0 253.6h1v1h-1zM519.8 253.6h1v1h-1zM524.7 253.6h1v1h-1zM529.5 253.6h1v1h-1zM534.4 253.6h1v1h-1zM539.2 253.6h1v1h-1zM544.1 253.6h1v1h-1zM548.9 253.6h1v1h-1zM553.8 253.6h1v1h-1zM558.6 253.6h1v1h-1zM563.5 253.6h1v1h-1zM568.3 253.6h1v1h-1zM573.1 253.6h1v1h-1zM578.0 253.6h1v1h-1zM582.8 253.6h1v1h-1zM587.7 253.6h1v1h-1zM592.5 253.6h1v1h-1zM597.4 253.6h1v1h-1zM602.2 253.6h1v1h-1zM607.1 253.6h1v1h-1zM611.9 253.6h1v1h-1zM402.7 255.7h1v1h-1zM407.6 255.7h1v1h-1zM412.5 255.7h1v1h-1zM417.4 255.7h1v1h-1zM422.2 255.7h1v1h-1zM427.1 255.7h1v1h-1zM432.0 255.7h1v1h-1zM436.9 255.7h1v1h-1zM441.8 255.7h1v1h-1zM446.6 255.7h1v1h-1zM451.5 255.7h1v1h-1zM456.4 255.7h1v1h-1zM461.3 255.7h1v1h-1zM466.2 255.7h1v1h-1zM471.1 255.7h1v1h-1zM475.9 255.7h1v1h-1zM480.8 255.7h1v1h-1zM485.7 255.7h1v1h-1zM490.6 255.7h1v1h-1zM495.5 255.7h1v1h-1zM500.4 255.7h1v1h-1zM505.2 255.7h1v1h-1zM510.1 255.7h1v1h-1zM515.0 255.7h1v1h-1zM519.9 255.7h1v1h-1zM524.8 255.7h1v1h-1zM529.7 255.7h1v1h-1zM534.5 255.7h1v1h-1zM539.4 255.7h1v1h-1zM544.3 255.7h1v1h-1zM549.2 255.7h1v1h-1zM554.1 255.7h1v1h-1zM559.0 255.7h1v1h-1zM563.8 255.7h1v1h-1zM568.7 255.7h1v1h-1zM573.6 255.7h1v1h-1zM578.5 255.7h1v1h-1zM583.4 255.7h1v1h-1zM588.2 255.7h1v1h-1zM593.1 255.7h1v1h-1zM598.0 255.7h1v1h-1zM602.9 255.7h1v1h-1zM607.8 255.7h1v1h-1zM612.7 255.7h1v1h-1zM401.9 257.8h1v1h-1zM406.8 257.8h1v1h-1zM411.8 257.8h1v1h-1zM416.7 257.8h1v1h-1zM421.6 257.8h1v1h-1zM426.5 257.8h1v1h-1zM431.4 257.8h1v1h-1zM436.3 257.8h1v1h-1zM441.3 257.8h1v1h-1zM446.2 257.8h1v1h-1zM451.1 257.8h1v1h-1zM456.0 257.8h1v1h-1zM460.9 257.8h1v1h-1zM465.9 257.8h1v1h-1zM470.8 257.8h1v1h-1zM475.7 257.8h1v1h-1zM480.6 257.8h1v1h-1zM485.5 257.8h1v1h-1zM490.4 257.8h1v1h-1zM495.4 257.8h1v1h-1zM500.3 257.8h1v1h-1zM505.2 257.8h1v1h-1zM510.1 257.8h1v1h-1zM515.0 257.8h1v1h-1zM520.0 257.8h1v1h-1zM524.9 257.8h1v1h-1zM529.8 257.8h1v1h-1zM534.7 257.8h1v1h-1zM539.6 257.8h1v1h-1zM544.5 257.8h1v1h-1zM549.5 257.8h1v1h-1zM554.4 257.8h1v1h-1zM559.3 257.8h1v1h-1zM564.2 257.8h1v1h-1zM569.1 257.8h1v1h-1zM574.1 257.8h1v1h-1zM579.0 257.8h1v1h-1zM583.9 257.8h1v1h-1zM588.8 257.8h1v1h-1zM593.7 257.8h1v1h-1zM598.6 257.8h1v1h-1zM603.6 257.8h1v1h-1zM608.5 257.8h1v1h-1zM613.4 257.8h1v1h-1zM401.1 260.0h1v1h-1zM406.1 260.0h1v1h-1zM411.0 260.0h1v1h-1zM416.0 260.0h1v1h-1zM420.9 260.0h1v1h-1zM425.9 260.0h1v1h-1zM430.8 260.0h1v1h-1zM435.8 260.0h1v1h-1zM440.8 260.0h1v1h-1zM445.7 260.0h1v1h-1zM450.7 260.0h1v1h-1zM455.6 260.0h1v1h-1zM460.6 260.0h1v1h-1zM465.5 260.0h1v1h-1zM470.5 260.0h1v1h-1zM475.4 260.0h1v1h-1zM480.4 260.0h1v1h-1zM485.3 260.0h1v1h-1zM490.3 260.0h1v1h-1zM495.3 260.0h1v1h-1zM500.2 260.0h1v1h-1zM505.2 260.0h1v1h-1zM510.1 260.0h1v1h-1zM515.1 260.0h1v1h-1zM520.0 260.0h1v1h-1zM525.0 260.0h1v1h-1zM529.9 260.0h1v1h-1zM534.9 260.0h1v1h-1zM539.8 260.0h1v1h-1zM544.8 260.0h1v1h-1zM549.7 260.0h1v1h-1zM554.7 260.0h1v1h-1zM559.7 260.0h1v1h-1zM564.6 260.0h1v1h-1zM569.6 260.0h1v1h-1zM574.5 260.0h1v1h-1zM579.5 260.0h1v1h-1zM584.4 260.0h1v1h-1zM589.4 260.0h1v1h-1zM594.3 260.0h1v1h-1zM599.3 260.0h1v1h-1zM604.2 260.0h1v1h-1zM609.2 260.0h1v1h-1zM614.2 260.0h1v1h-1zM400.3 262.2h1v1h-1zM405.3 262.2h1v1h-1zM410.3 262.2h1v1h-1zM415.3 262.2h1v1h-1zM420.3 262.2h1v1h-1zM425.3 262.2h1v1h-1zM430.3 262.2h1v1h-1zM435.2 262.2h1v1h-1zM440.2 262.2h1v1h-1zM445.2 262.2h1v1h-1zM450.2 262.2h1v1h-1zM455.2 262.2h1v1h-1zM460.2 262.2h1v1h-1zM465.2 262.2h1v1h-1zM470.2 262.2h1v1h-1zM475.2 262.2h1v1h-1zM480.2 262.2h1v1h-1zM485.2 262.2h1v1h-1zM490.1 262.2h1v1h-1zM495.1 262.2h1v1h-1zM500.1 262.2h1v1h-1zM505.1 262.2h1v1h-1zM510.1 262.2h1v1h-1zM515.1 262.2h1v1h-1zM520.1 262.2h1v1h-1zM525.1 262.2h1v1h-1zM530.1 262.2h1v1h-1zM535.1 262.2h1v1h-1zM540.1 262.2h1v1h-1zM545.0 262.2h1v1h-1zM550.0 262.2h1v1h-1zM555.0 262.2h1v1h-1zM560.0 262.2h1v1h-1zM565.0 262.2h1v1h-1zM570.0 262.2h1v1h-1zM575.0 262.2h1v1h-1zM580.0 262.2h1v1h-1zM585.0 262.2h1v1h-1zM590.0 262.2h1v1h-1zM595.0 262.2h1v1h-1zM599.9 262.2h1v1h-1zM604.9 262.2h1v1h-1zM609.9 262.2h1v1h-1zM614.9 262.2h1v1h-1zM399.5 264.4h1v1h-1zM404.5 264.4h1v1h-1zM409.5 264.4h1v1h-1zM414.6 264.4h1v1h-1zM419.6 264.4h1v1h-1zM424.6 264.4h1v1h-1zM429.7 264.4h1v1h-1zM434.7 264.4h1v1h-1zM439.7 264.4h1v1h-1zM444.7 264.4h1v1h-1zM449.8 264.4h1v1h-1zM454.8 264.4h1v1h-1zM459.8 264.4h1v1h-1zM464.9 264.4h1v1h-1zM469.9 264.4h1v1h-1zM474.9 264.4h1v1h-1zM479.9 264.4h1v1h-1zM485.0 264.4h1v1h-1zM490.0 264.4h1v1h-1zM495.0 264.4h1v1h-1zM500.0 264.4h1v1h-1zM505.1 264.4h1v1h-1zM510.1 264.4h1v1h-1zM515.1 264.4h1v1h-1zM520.2 264.4h1v1h-1zM525.2 264.4h1v1h-1zM530.2 264.4h1v1h-1zM535.2 264.4h1v1h-1zM540.3 264.4h1v1h-1zM545.3 264.4h1v1h-1zM550.3 264.4h1v1h-1zM555.4 264.4h1v1h-1zM560.4 264.4h1v1h-1zM565.4 264.4h1v1h-1zM570.4 264.4h1v1h-1zM575.5 264.4h1v1h-1zM580.5 264.4h1v1h-1zM585.5 264.4h1v1h-1zM590.6 264.4h1v1h-1zM595.6 264.4h1v1h-1zM600.6 264.4h1v1h-1zM605.6 264.4h1v1h-1zM610.7 264.4h1v1h-1zM615.7 264.4h1v1h-1zM398.7 266.6h1v1h-1zM403.7 266.6h1v1h-1zM408.8 266.6h1v1h-1zM413.8 266.6h1v1h-1zM418.9 266.6h1v1h-1zM424.0 266.6h1v1h-1zM429.0 266.6h1v1h-1zM434.1 266.6h1v1h-1zM439.2 266.6h1v1h-1zM444.2 266.6h1v1h-1zM449.3 266.6h1v1h-1zM454.4 266.6h1v1h-1zM459.4 266.6h1v1h-1zM464.5 266.6h1v1h-1zM469.6 266.6h1v1h-1zM474.6 266.6h1v1h-1zM479.7 266.6h1v1h-1zM484.8 266.6h1v1h-1zM489.8 266.6h1v1h-1zM494.9 266.6h1v1h-1zM500.0 266.6h1v1h-1zM505.0 266.6h1v1h-1zM510.1 266.6h1v1h-1zM515.2 266.6h1v1h-1zM520.2 266.6h1v1h-1zM525.3 266.6h1v1h-1zM530.4 266.6h1v1h-1zM535.4 266.6h1v1h-1zM540.5 266.6h1v1h-1zM545.6 266.6h1v1h-1zM550.6 266.6h1v1h-1zM555.7 266.6h1v1h-1zM560.8 266.6h1v1h-1zM565.8 266.6h1v1h-1zM570.9 266.6h1v1h-1zM576.0 266.6h1v1h-1zM581.0 266.6h1v1h-1zM586.1 266.6h1v1h-1zM591.1 266.6h1v1h-1zM596.2 266.6h1v1h-1zM601.3 266.6h1v1h-1zM606.3 266.6h1v1h-1zM611.4 266.6h1v1h-1zM616.5 266.6h1v1h-1zM397.8 268.9h1v1h-1zM402.9 268.9h1v1h-1zM408.0 268.9h1v1h-1zM413.1 268.9h1v1h-1zM418.2 268.9h1v1h-1zM423.3 268.9h1v1h-1zM428.4 268.9h1v1h-1zM433.5 268.9h1v1h-1zM438.6 268.9h1v1h-1zM443.7 268.9h1v1h-1zM448.8 268.9h1v1h-1zM453.9 268.9h1v1h-1zM459.1 268.9h1v1h-1zM464.2 268.9h1v1h-1zM469.3 268.9h1v1h-1zM474.4 268.9h1v1h-1zM479.5 268.9h1v1h-1zM484.6 268.9h1v1h-1zM489.7 268.9h1v1h-1zM494.8 268.9h1v1h-1zM499.9 268.9h1v1h-1zM505.0 268.9h1v1h-1zM510.1 268.9h1v1h-1zM515.2 268.9h1v1h-1zM520.3 268.9h1v1h-1zM525.4 268.9h1v1h-1zM530.5 268.9h1v1h-1zM535.6 268.9h1v1h-1zM540.7 268.9h1v1h-1zM545.8 268.9h1v1h-1zM550.9 268.9h1v1h-1zM556.0 268.9h1v1h-1zM561.1 268.9h1v1h-1zM566.2 268.9h1v1h-1zM571.3 268.9h1v1h-1zM576.4 268.9h1v1h-1zM581.5 268.9h1v1h-1zM586.7 268.9h1v1h-1zM591.8 268.9h1v1h-1zM596.9 268.9h1v1h-1zM602.0 268.9h1v1h-1zM607.1 268.9h1v1h-1zM612.2 268.9h1v1h-1zM617.3 268.9h1v1h-1zM396.9 271.2h1v1h-1zM402.1 271.2h1v1h-1zM407.2 271.2h1v1h-1zM412.4 271.2h1v1h-1zM417.5 271.2h1v1h-1zM422.7 271.2h1v1h-1zM427.8 271.2h1v1h-1zM432.9 271.2h1v1h-1zM438.1 271.2h1v1h-1zM443.2 271.2h1v1h-1zM448.4 271.2h1v1h-1zM453.5 271.2h1v1h-1zM458.7 271.2h1v1h-1zM463.8 271.2h1v1h-1zM468.9 271.2h1v1h-1zM474.1 271.2h1v1h-1zM479.2 271.2h1v1h-1zM484.4 271.2h1v1h-1zM489.5 271.2h1v1h-1zM494.7 271.2h1v1h-1zM499.8 271.2h1v1h-1zM504.9 271.2h1v1h-1zM510.1 271.2h1v1h-1zM515.2 271.2h1v1h-1zM520.4 271.2h1v1h-1zM525.5 271.2h1v1h-1zM530.7 271.2h1v1h-1zM535.8 271.2h1v1h-1zM540.9 271.2h1v1h-1zM546.1 271.2h1v1h-1zM551.2 271.2h1v1h-1zM556.4 271.2h1v1h-1zM561.5 271.2h1v1h-1zM566.7 271.2h1v1h-1zM571.8 271.2h1v1h-1zM576.9 271.2h1v1h-1zM582.1 271.2h1v1h-1zM587.2 271.2h1v1h-1zM592.4 271.2h1v1h-1zM597.5 271.2h1v1h-1zM602.7 271.2h1v1h-1zM607.8 271.2h1v1h-1zM612.9 271.2h1v1h-1zM618.1 271.2h1v1h-1zM396.1 273.6h1v1h-1zM401.3 273.6h1v1h-1zM406.4 273.6h1v1h-1zM411.6 273.6h1v1h-1zM416.8 273.6h1v1h-1zM422.0 273.6h1v1h-1zM427.2 273.6h1v1h-1zM432.3 273.6h1v1h-1zM437.5 273.6h1v1h-1zM442.7 273.6h1v1h-1zM447.9 273.6h1v1h-1zM453.1 273.6h1v1h-1zM458.3 273.6h1v1h-1zM463.4 273.6h1v1h-1zM468.6 273.6h1v1h-1zM473.8 273.6h1v1h-1zM479.0 273.6h1v1h-1zM484.2 273.6h1v1h-1zM489.4 273.6h1v1h-1zM494.5 273.6h1v1h-1zM499.7 273.6h1v1h-1zM504.9 273.6h1v1h-1zM510.1 273.6h1v1h-1zM515.3 273.6h1v1h-1zM520.4 273.6h1v1h-1zM525.6 273.6h1v1h-1zM530.8 273.6h1v1h-1zM536.0 273.6h1v1h-1zM541.2 273.6h1v1h-1zM546.4 273.6h1v1h-1zM551.5 273.6h1v1h-1zM556.7 273.6h1v1h-1zM561.9 273.6h1v1h-1zM567.1 273.6h1v1h-1zM572.3 273.6h1v1h-1zM577.4 273.6h1v1h-1zM582.6 273.6h1v1h-1zM587.8 273.6h1v1h-1zM593.0 273.6h1v1h-1zM598.2 273.6h1v1h-1zM603.4 273.6h1v1h-1zM608.5 273.6h1v1h-1zM613.7 273.6h1v1h-1zM618.9 273.6h1v1h-1zM395.2 276.0h1v1h-1zM400.4 276.0h1v1h-1zM405.6 276.0h1v1h-1zM410.9 276.0h1v1h-1zM416.1 276.0h1v1h-1zM421.3 276.0h1v1h-1zM426.5 276.0h1v1h-1zM431.7 276.0h1v1h-1zM437.0 276.0h1v1h-1zM442.2 276.0h1v1h-1zM447.4 276.0h1v1h-1zM452.6 276.0h1v1h-1zM457.9 276.0h1v1h-1zM463.1 276.0h1v1h-1zM468.3 276.0h1v1h-1zM473.5 276.0h1v1h-1zM478.7 276.0h1v1h-1zM484.0 276.0h1v1h-1zM489.2 276.0h1v1h-1zM494.4 276.0h1v1h-1zM499.6 276.0h1v1h-1zM504.9 276.0h1v1h-1zM510.1 276.0h1v1h-1zM515.3 276.0h1v1h-1zM520.5 276.0h1v1h-1zM525.7 276.0h1v1h-1zM531.0 276.0h1v1h-1zM536.2 276.0h1v1h-1zM541.4 276.0h1v1h-1zM546.6 276.0h1v1h-1zM551.9 276.0h1v1h-1zM557.1 276.0h1v1h-1zM562.3 276.0h1v1h-1zM567.5 276.0h1v1h-1zM572.7 276.0h1v1h-1zM578.0 276.0h1v1h-1zM583.2 276.0h1v1h-1zM588.4 276.0h1v1h-1zM593.6 276.0h1v1h-1zM598.9 276.0h1v1h-1zM604.1 276.0h1v1h-1zM609.3 276.0h1v1h-1zM614.5 276.0h1v1h-1zM619.7 276.0h1v1h-1zM394.3 278.4h1v1h-1zM399.5 278.4h1v1h-1zM404.8 278.4h1v1h-1zM410.1 278.4h1v1h-1zM415.3 278.4h1v1h-1zM420.6 278.4h1v1h-1zM425.9 278.4h1v1h-1zM431.1 278.4h1v1h-1zM436.4 278.4h1v1h-1zM441.7 278.4h1v1h-1zM446.9 278.4h1v1h-1zM452.2 278.4h1v1h-1zM457.4 278.4h1v1h-1zM462.7 278.4h1v1h-1zM468.0 278.4h1v1h-1zM473.2 278.4h1v1h-1zM478.5 278.4h1v1h-1zM483.8 278.4h1v1h-1zM489.0 278.4h1v1h-1zM494.3 278.4h1v1h-1zM499.5 278.4h1v1h-1zM504.8 278.4h1v1h-1zM510.1 278.4h1v1h-1zM515.3 278.4h1v1h-1zM520.6 278.4h1v1h-1zM525.9 278.4h1v1h-1zM531.1 278.4h1v1h-1zM536.4 278.4h1v1h-1zM541.6 278.4h1v1h-1zM546.9 278.4h1v1h-1zM552.2 278.4h1v1h-1zM557.4 278.4h1v1h-1zM562.7 278.4h1v1h-1zM568.0 278.4h1v1h-1zM573.2 278.4h1v1h-1zM578.5 278.4h1v1h-1zM583.7 278.4h1v1h-1zM589.0 278.4h1v1h-1zM594.3 278.4h1v1h-1zM599.5 278.4h1v1h-1zM604.8 278.4h1v1h-1zM610.1 278.4h1v1h-1zM615.3 278.4h1v1h-1zM620.6 278.4h1v1h-1zM393.4 280.9h1v1h-1zM398.7 280.9h1v1h-1zM404.0 280.9h1v1h-1zM409.3 280.9h1v1h-1zM414.6 280.9h1v1h-1zM419.9 280.9h1v1h-1zM425.2 280.9h1v1h-1zM430.5 280.9h1v1h-1zM435.8 280.9h1v1h-1zM441.1 280.9h1v1h-1zM446.4 280.9h1v1h-1zM451.7 280.9h1v1h-1zM457.0 280.9h1v1h-1zM462.3 280.9h1v1h-1zM467.6 280.9h1v1h-1zM472.9 280.9h1v1h-1zM478.2 280.9h1v1h-1zM483.5 280.9h1v1h-1zM488.8 280.9h1v1h-1zM494.1 280.9h1v1h-1zM499.5 280.9h1v1h-1zM504.8 280.9h1v1h-1zM510.1 280.9h1v1h-1zM515.4 280.9h1v1h-1zM520.7 280.9h1v1h-1zM526.0 280.9h1v1h-1zM531.3 280.9h1v1h-1zM536.6 280.9h1v1h-1zM541.9 280.9h1v1h-1zM547.2 280.9h1v1h-1zM552.5 280.9h1v1h-1zM557.8 280.9h1v1h-1zM563.1 280.9h1v1h-1zM568.4 280.9h1v1h-1zM573.7 280.9h1v1h-1zM579.0 280.9h1v1h-1zM584.3 280.9h1v1h-1zM589.6 280.9h1v1h-1zM594.9 280.9h1v1h-1zM600.2 280.9h1v1h-1zM605.5 280.9h1v1h-1zM610.8 280.9h1v1h-1zM616.1 280.9h1v1h-1zM621.5 280.9h1v1h-1zM392.4 283.4h1v1h-1zM397.8 283.4h1v1h-1zM403.1 283.4h1v1h-1zM408.5 283.4h1v1h-1zM413.8 283.4h1v1h-1zM419.2 283.4h1v1h-1zM424.5 283.4h1v1h-1zM429.9 283.4h1v1h-1zM435.2 283.4h1v1h-1zM440.6 283.4h1v1h-1zM445.9 283.4h1v1h-1zM451.2 283.4h1v1h-1zM456.6 283.4h1v1h-1zM461.9 283.4h1v1h-1zM467.3 283.4h1v1h-1zM472.6 283.4h1v1h-1zM478.0 283.4h1v1h-1zM483.3 283.4h1v1h-1zM488.7 283.4h1v1h-1zM494.0 283.4h1v1h-1zM499.4 283.4h1v1h-1zM504.7 283.4h1v1h-1zM510.1 283.4h1v1h-1zM515.4 283.4h1v1h-1zM520.7 283.4h1v1h-1zM526.1 283.4h1v1h-1zM531.4 283.4h1v1h-1zM536.8 283.4h1v1h-1zM542.1 283.4h1v1h-1zM547.5 283.4h1v1h-1zM552.8 283.4h1v1h-1zM558.2 283.4h1v1h-1zM563.5 283.4h1v1h-1zM568.9 283.4h1v1h-1zM574.2 283.4h1v1h-1zM579.6 283.4h1v1h-1zM584.9 283.4h1v1h-1zM590.2 283.4h1v1h-1zM595.6 283.4h1v1h-1zM600.9 283.4h1v1h-1zM606.3 283.4h1v1h-1zM611.6 283.4h1v1h-1zM617.0 283.4h1v1h-1zM622.3 283.4h1v1h-1zM391.5 285.9h1v1h-1zM396.9 285.9h1v1h-1zM402.3 285.9h1v1h-1zM407.7 285.9h1v1h-1zM413.1 285.9h1v1h-1zM418.4 285.9h1v1h-1zM423.8 285.9h1v1h-1zM429.2 285.9h1v1h-1zM434.6 285.9h1v1h-1zM440.0 285.9h1v1h-1zM445.4 285.9h1v1h-1zM450.8 285.9h1v1h-1zM456.2 285.9h1v1h-1zM461.6 285.9h1v1h-1zM466.9 285.9h1v1h-1zM472.3 285.9h1v1h-1zM477.7 285.9h1v1h-1zM483.1 285.9h1v1h-1zM488.5 285.9h1v1h-1zM493.9 285.9h1v1h-1zM499.3 285.9h1v1h-1zM504.7 285.9h1v1h-1zM510.0 285.9h1v1h-1zM515.4 285.9h1v1h-1zM520.8 285.9h1v1h-1zM526.2 285.9h1v1h-1zM531.6 285.9h1v1h-1zM537.0 285.9h1v1h-1zM542.4 285.9h1v1h-1zM547.8 285.9h1v1h-1zM553.2 285.9h1v1h-1zM558.5 285.9h1v1h-1zM563.9 285.9h1v1h-1zM569.3 285.9h1v1h-1zM574.7 285.9h1v1h-1zM580.1 285.9h1v1h-1zM585.5 285.9h1v1h-1zM590.9 285.9h1v1h-1zM596.3 285.9h1v1h-1zM601.7 285.9h1v1h-1zM607.0 285.9h1v1h-1zM612.4 285.9h1v1h-1zM617.8 285.9h1v1h-1zM623.2 285.9h1v1h-1zM390.5 288.5h1v1h-1zM396.0 288.5h1v1h-1zM401.4 288.5h1v1h-1zM406.8 288.5h1v1h-1zM412.3 288.5h1v1h-1zM417.7 288.5h1v1h-1zM423.1 288.5h1v1h-1zM428.6 288.5h1v1h-1zM434.0 288.5h1v1h-1zM439.4 288.5h1v1h-1zM444.9 288.5h1v1h-1zM450.3 288.5h1v1h-1zM455.7 288.5h1v1h-1zM461.2 288.5h1v1h-1zM466.6 288.5h1v1h-1zM472.0 288.5h1v1h-1zM477.5 288.5h1v1h-1zM482.9 288.5h1v1h-1zM488.3 288.5h1v1h-1zM493.7 288.5h1v1h-1zM499.2 288.5h1v1h-1zM504.6 288.5h1v1h-1zM510.0 288.5h1v1h-1zM515.5 288.5h1v1h-1zM520.9 288.5h1v1h-1zM526.3 288.5h1v1h-1zM531.8 288.5h1v1h-1zM537.2 288.5h1v1h-1zM542.6 288.5h1v1h-1zM548.1 288.5h1v1h-1zM553.5 288.5h1v1h-1zM558.9 288.5h1v1h-1zM564.4 288.5h1v1h-1zM569.8 288.5h1v1h-1zM575.2 288.5h1v1h-1zM580.7 288.5h1v1h-1zM586.1 288.5h1v1h-1zM591.5 288.5h1v1h-1zM597.0 288.5h1v1h-1zM602.4 288.5h1v1h-1zM607.8 288.5h1v1h-1zM613.3 288.5h1v1h-1zM618.7 288.5h1v1h-1zM624.1 288.5h1v1h-1zM389.6 291.1h1v1h-1zM395.0 291.1h1v1h-1zM400.5 291.1h1v1h-1zM406.0 291.1h1v1h-1zM411.5 291.1h1v1h-1zM416.9 291.1h1v1h-1zM422.4 291.1h1v1h-1zM427.9 291.1h1v1h-1zM433.4 291.1h1v1h-1zM438.8 291.1h1v1h-1zM444.3 291.1h1v1h-1zM449.8 291.1h1v1h-1zM455.3 291.1h1v1h-1zM460.8 291.1h1v1h-1zM466.2 291.1h1v1h-1zM471.7 291.1h1v1h-1zM477.2 291.1h1v1h-1zM482.7 291.1h1v1h-1zM488.1 291.1h1v1h-1zM493.6 291.1h1v1h-1zM499.1 291.1h1v1h-1zM504.6 291.1h1v1h-1zM510.0 291.1h1v1h-1zM515.5 291.1h1v1h-1zM521.0 291.1h1v1h-1zM526.5 291.1h1v1h-1zM531.9 291.1h1v1h-1zM537.4 291.1h1v1h-1zM542.9 291.1h1v1h-1zM548.4 291.1h1v1h-1zM553.8 291.1h1v1h-1zM559.3 291.1h1v1h-1zM564.8 291.1h1v1h-1zM570.3 291.1h1v1h-1zM575.7 291.1h1v1h-1zM581.2 291.1h1v1h-1zM586.7 291.1h1v1h-1zM592.2 291.1h1v1h-1zM597.7 291.1h1v1h-1zM603.1 291.1h1v1h-1zM608.6 291.1h1v1h-1zM614.1 291.1h1v1h-1zM619.6 291.1h1v1h-1zM625.0 291.1h1v1h-1zM388.6 293.8h1v1h-1zM394.1 293.8h1v1h-1zM399.6 293.8h1v1h-1zM405.1 293.8h1v1h-1zM410.7 293.8h1v1h-1zM416.2 293.8h1v1h-1zM421.7 293.8h1v1h-1zM427.2 293.8h1v1h-1zM432.7 293.8h1v1h-1zM438.3 293.8h1v1h-1zM443.8 293.8h1v1h-1zM449.3 293.8h1v1h-1zM454.8 293.8h1v1h-1zM460.3 293.8h1v1h-1zM465.9 293.8h1v1h-1zM471.4 293.8h1v1h-1zM476.9 293.8h1v1h-1zM482.4 293.8h1v1h-1zM487.9 293.8h1v1h-1zM493.5 293.8h1v1h-1zM499.0 293.8h1v1h-1zM504.5 293.8h1v1h-1zM510.0 293.8h1v1h-1zM515.6 293.8h1v1h-1zM521.1 293.8h1v1h-1zM526.6 293.8h1v1h-1zM532.1 293.8h1v1h-1zM537.6 293.8h1v1h-1zM543.2 293.8h1v1h-1zM548.7 293.8h1v1h-1zM554.2 293.8h1v1h-1zM559.7 293.8h1v1h-1zM565.2 293.8h1v1h-1zM570.8 293.8h1v1h-1zM576.3 293.8h1v1h-1zM581.8 293.8h1v1h-1zM587.3 293.8h1v1h-1zM592.8 293.8h1v1h-1zM598.4 293.8h1v1h-1zM603.9 293.8h1v1h-1zM609.4 293.8h1v1h-1zM614.9 293.8h1v1h-1zM620.4 293.8h1v1h-1zM626.0 293.8h1v1h-1zM387.6 296.5h1v1h-1zM393.1 296.5h1v1h-1zM398.7 296.5h1v1h-1zM404.3 296.5h1v1h-1zM409.8 296.5h1v1h-1zM415.4 296.5h1v1h-1zM421.0 296.5h1v1h-1zM426.5 296.5h1v1h-1zM432.1 296.5h1v1h-1zM437.7 296.5h1v1h-1zM443.2 296.5h1v1h-1zM448.8 296.5h1v1h-1zM454.4 296.5h1v1h-1zM459.9 296.5h1v1h-1zM465.5 296.5h1v1h-1zM471.1 296.5h1v1h-1zM476.6 296.5h1v1h-1zM482.2 296.5h1v1h-1zM487.8 296.5h1v1h-1zM493.3 296.5h1v1h-1zM498.9 296.5h1v1h-1zM504.5 296.5h1v1h-1zM510.0 296.5h1v1h-1zM515.6 296.5h1v1h-1zM521.2 296.5h1v1h-1zM526.7 296.5h1v1h-1zM532.3 296.5h1v1h-1zM537.9 296.5h1v1h-1zM543.4 296.5h1v1h-1zM549.0 296.5h1v1h-1zM554.6 296.5h1v1h-1zM560.1 296.5h1v1h-1zM565.7 296.5h1v1h-1zM571.3 296.5h1v1h-1zM576.8 296.5h1v1h-1zM582.4 296.5h1v1h-1zM588.0 296.5h1v1h-1zM593.5 296.5h1v1h-1zM599.1 296.5h1v1h-1zM604.6 296.5h1v1h-1zM610.2 296.5h1v1h-1zM615.8 296.5h1v1h-1zM621.3 296.5h1v1h-1zM626.9 296.5h1v1h-1zM386.5 299.3h1v1h-1zM392.2 299.3h1v1h-1zM397.8 299.3h1v1h-1zM403.4 299.3h1v1h-1zM409.0 299.3h1v1h-1zM414.6 299.3h1v1h-1zM420.2 299.3h1v1h-1zM425.8 299.3h1v1h-1zM431.4 299.3h1v1h-1zM437.1 299.3h1v1h-1zM442.7 299.3h1v1h-1zM448.3 299.3h1v1h-1zM453.9 299.3h1v1h-1zM459.5 299.3h1v1h-1zM465.1 299.3h1v1h-1zM470.7 299.3h1v1h-1zM476.3 299.3h1v1h-1zM482.0 299.3h1v1h-1zM487.6 299.3h1v1h-1zM493.2 299.3h1v1h-1zM498.8 299.3h1v1h-1zM504.4 299.3h1v1h-1zM510.0 299.3h1v1h-1zM515.6 299.3h1v1h-1zM521.2 299.3h1v1h-1zM526.9 299.3h1v1h-1zM532.5 299.3h1v1h-1zM538.1 299.3h1v1h-1zM543.7 299.3h1v1h-1zM549.3 299.3h1v1h-1zM554.9 299.3h1v1h-1zM560.5 299.3h1v1h-1zM566.1 299.3h1v1h-1zM571.8 299.3h1v1h-1zM577.4 299.3h1v1h-1zM583.0 299.3h1v1h-1zM588.6 299.3h1v1h-1zM594.2 299.3h1v1h-1zM599.8 299.3h1v1h-1zM605.4 299.3h1v1h-1zM611.0 299.3h1v1h-1zM616.7 299.3h1v1h-1zM622.3 299.3h1v1h-1zM627.9 299.3h1v1h-1zM385.5 302.1h1v1h-1zM391.2 302.1h1v1h-1zM396.8 302.1h1v1h-1zM402.5 302.1h1v1h-1zM408.1 302.1h1v1h-1zM413.8 302.1h1v1h-1zM419.5 302.1h1v1h-1zM425.1 302.1h1v1h-1zM430.8 302.1h1v1h-1zM436.4 302.1h1v1h-1zM442.1 302.1h1v1h-1zM447.8 302.1h1v1h-1zM453.4 302.1h1v1h-1zM459.1 302.1h1v1h-1zM464.7 302.1h1v1h-1zM470.4 302.1h1v1h-1zM476.1 302.1h1v1h-1zM481.7 302.1h1v1h-1zM487.4 302.1h1v1h-1zM493.0 302.1h1v1h-1zM498.7 302.1h1v1h-1zM504.4 302.1h1v1h-1zM510.0 302.1h1v1h-1zM515.7 302.1h1v1h-1zM521.3 302.1h1v1h-1zM527.0 302.1h1v1h-1zM532.6 302.1h1v1h-1zM538.3 302.1h1v1h-1zM544.0 302.1h1v1h-1zM549.6 302.1h1v1h-1zM555.3 302.1h1v1h-1zM560.9 302.1h1v1h-1zM566.6 302.1h1v1h-1zM572.3 302.1h1v1h-1zM577.9 302.1h1v1h-1zM583.6 302.1h1v1h-1zM589.2 302.1h1v1h-1zM594.9 302.1h1v1h-1zM600.6 302.1h1v1h-1zM606.2 302.1h1v1h-1zM611.9 302.1h1v1h-1zM617.5 302.1h1v1h-1zM623.2 302.1h1v1h-1zM628.9 302.1h1v1h-1zM384.4 304.9h1v1h-1zM390.2 304.9h1v1h-1zM395.9 304.9h1v1h-1zM401.6 304.9h1v1h-1zM407.3 304.9h1v1h-1zM413.0 304.9h1v1h-1zM418.7 304.9h1v1h-1zM424.4 304.9h1v1h-1zM430.1 304.9h1v1h-1zM435.8 304.9h1v1h-1zM441.5 304.9h1v1h-1zM447.2 304.9h1v1h-1zM452.9 304.9h1v1h-1zM458.6 304.9h1v1h-1zM464.3 304.9h1v1h-1zM470.1 304.9h1v1h-1zM475.8 304.9h1v1h-1zM481.5 304.9h1v1h-1zM487.2 304.9h1v1h-1zM492.9 304.9h1v1h-1zM498.6 304.9h1v1h-1zM504.3 304.9h1v1h-1zM510.0 304.9h1v1h-1zM515.7 304.9h1v1h-1zM521.4 304.9h1v1h-1zM527.1 304.9h1v1h-1zM532.8 304.9h1v1h-1zM538.5 304.9h1v1h-1zM544.2 304.9h1v1h-1zM550.0 304.9h1v1h-1zM555.7 304.9h1v1h-1zM561.4 304.9h1v1h-1zM567.1 304.9h1v1h-1zM572.8 304.9h1v1h-1zM578.5 304.9h1v1h-1zM584.2 304.9h1v1h-1zM589.9 304.9h1v1h-1zM595.6 304.9h1v1h-1zM601.3 304.9h1v1h-1zM607.0 304.9h1v1h-1zM612.7 304.9h1v1h-1zM618.4 304.9h1v1h-1zM624.1 304.9h1v1h-1zM629.9 304.9h1v1h-1zM383.4 307.8h1v1h-1zM389.1 307.8h1v1h-1zM394.9 307.8h1v1h-1zM400.6 307.8h1v1h-1zM406.4 307.8h1v1h-1zM412.1 307.8h1v1h-1zM417.9 307.8h1v1h-1zM423.7 307.8h1v1h-1zM429.4 307.8h1v1h-1zM435.2 307.8h1v1h-1zM440.9 307.8h1v1h-1zM446.7 307.8h1v1h-1zM452.4 307.8h1v1h-1zM458.2 307.8h1v1h-1zM464.0 307.8h1v1h-1zM469.7 307.8h1v1h-1zM475.5 307.8h1v1h-1zM481.2 307.8h1v1h-1zM487.0 307.8h1v1h-1zM492.7 307.8h1v1h-1zM498.5 307.8h1v1h-1zM504.2 307.8h1v1h-1zM510.0 307.8h1v1h-1zM515.8 307.8h1v1h-1zM521.5 307.8h1v1h-1zM527.3 307.8h1v1h-1zM533.0 307.8h1v1h-1zM538.8 307.8h1v1h-1zM544.5 307.8h1v1h-1zM550.3 307.8h1v1h-1zM556.0 307.8h1v1h-1zM561.8 307.8h1v1h-1zM567.6 307.8h1v1h-1zM573.3 307.8h1v1h-1zM579.1 307.8h1v1h-1zM584.8 307.8h1v1h-1zM590.6 307.8h1v1h-1zM596.3 307.8h1v1h-1zM602.1 307.8h1v1h-1zM607.8 307.8h1v1h-1zM613.6 307.8h1v1h-1zM619.4 307.8h1v1h-1zM625.1 307.8h1v1h-1zM630.9 307.8h1v1h-1zM382.3 310.8h1v1h-1zM388.1 310.8h1v1h-1zM393.9 310.8h1v1h-1zM399.7 310.8h1v1h-1zM405.5 310.8h1v1h-1zM411.3 310.8h1v1h-1zM417.1 310.8h1v1h-1zM422.9 310.8h1v1h-1zM428.7 310.8h1v1h-1zM434.5 310.8h1v1h-1zM440.3 310.8h1v1h-1zM446.1 310.8h1v1h-1zM451.9 310.8h1v1h-1zM457.7 310.8h1v1h-1zM463.5 310.8h1v1h-1zM469.4 310.8h1v1h-1zM475.2 310.8h1v1h-1zM481.0 310.8h1v1h-1zM486.8 310.8h1v1h-1zM492.6 310.8h1v1h-1zM498.4 310.8h1v1h-1zM504.2 310.8h1v1h-1zM510.0 310.8h1v1h-1zM515.8 310.8h1v1h-1zM521.6 310.8h1v1h-1zM527.4 310.8h1v1h-1zM533.2 310.8h1v1h-1zM539.0 310.8h1v1h-1zM544.8 310.8h1v1h-1zM550.6 310.8h1v1h-1zM556.4 310.8h1v1h-1zM562.2 310.8h1v1h-1zM568.0 310.8h1v1h-1zM573.8 310.8h1v1h-1zM579.6 310.8h1v1h-1zM585.5 310.8h1v1h-1zM591.3 310.8h1v1h-1zM597.1 310.8h1v1h-1zM602.9 310.8h1v1h-1zM608.7 310.8h1v1h-1zM614.5 310.8h1v1h-1zM620.3 310.8h1v1h-1zM626.1 310.8h1v1h-1zM631.9 310.8h1v1h-1zM381.2 313.8h1v1h-1zM387.0 313.8h1v1h-1zM392.9 313.8h1v1h-1zM398.7 313.8h1v1h-1zM404.6 313.8h1v1h-1zM410.4 313.8h1v1h-1zM416.3 313.8h1v1h-1zM422.2 313.8h1v1h-1zM428.0 313.8h1v1h-1zM433.9 313.8h1v1h-1zM439.7 313.8h1v1h-1zM445.6 313.8h1v1h-1zM451.4 313.8h1v1h-1zM457.3 313.8h1v1h-1zM463.1 313.8h1v1h-1zM469.0 313.8h1v1h-1zM474.8 313.8h1v1h-1zM480.7 313.8h1v1h-1zM486.6 313.8h1v1h-1zM492.4 313.8h1v1h-1zM498.3 313.8h1v1h-1zM504.1 313.8h1v1h-1zM510.0 313.8h1v1h-1zM515.8 313.8h1v1h-1zM521.7 313.8h1v1h-1zM527.5 313.8h1v1h-1zM533.4 313.8h1v1h-1zM539.3 313.8h1v1h-1zM545.1 313.8h1v1h-1zM551.0 313.8h1v1h-1zM556.8 313.8h1v1h-1zM562.7 313.8h1v1h-1zM568.5 313.8h1v1h-1zM574.4 313.8h1v1h-1zM580.2 313.8h1v1h-1zM586.1 313.8h1v1h-1zM592.0 313.8h1v1h-1zM597.8 313.8h1v1h-1zM603.7 313.8h1v1h-1zM609.5 313.8h1v1h-1zM615.4 313.8h1v1h-1zM621.2 313.8h1v1h-1zM627.1 313.8h1v1h-1zM632.9 313.8h1v1h-1zM380.0 316.8h1v1h-1zM385.9 316.8h1v1h-1zM391.8 316.8h1v1h-1zM397.8 316.8h1v1h-1zM403.7 316.8h1v1h-1zM409.6 316.8h1v1h-1zM415.5 316.8h1v1h-1zM421.4 316.8h1v1h-1zM427.3 316.8h1v1h-1zM433.2 316.8h1v1h-1zM439.1 316.8h1v1h-1zM445.0 316.8h1v1h-1zM450.9 316.8h1v1h-1zM456.8 316.8h1v1h-1zM462.7 316.8h1v1h-1zM468.6 316.8h1v1h-1zM474.5 316.8h1v1h-1zM480.4 316.8h1v1h-1zM486.3 316.8h1v1h-1zM492.3 316.8h1v1h-1zM498.2 316.8h1v1h-1zM504.1 316.8h1v1h-1zM510.0 316.8h1v1h-1zM515.9 316.8h1v1h-1zM521.8 316.8h1v1h-1zM527.7 316.8h1v1h-1zM533.6 316.8h1v1h-1zM539.5 316.8h1v1h-1zM545.4 316.8h1v1h-1zM551.3 316.8h1v1h-1zM557.2 316.8h1v1h-1zM563.1 316.8h1v1h-1zM569.0 316.8h1v1h-1zM574.9 316.8h1v1h-1zM580.9 316.8h1v1h-1zM586.8 316.8h1v1h-1zM592.7 316.8h1v1h-1zM598.6 316.8h1v1h-1zM604.5 316.8h1v1h-1zM610.4 316.8h1v1h-1zM616.3 316.8h1v1h-1zM622.2 316.8h1v1h-1zM628.1 316.8h1v1h-1zM634.0 316.8h1v1h-1zM378.9 319.9h1v1h-1zM384.8 319.9h1v1h-1zM390.8 319.9h1v1h-1zM396.8 319.9h1v1h-1zM402.7 319.9h1v1h-1zM408.7 319.9h1v1h-1zM414.6 319.9h1v1h-1zM420.6 319.9h1v1h-1zM426.5 319.9h1v1h-1zM432.5 319.9h1v1h-1zM438.5 319.9h1v1h-1zM444.4 319.9h1v1h-1zM450.4 319.9h1v1h-1zM456.3 319.9h1v1h-1zM462.3 319.9h1v1h-1zM468.3 319.9h1v1h-1zM474.2 319.9h1v1h-1zM480.2 319.9h1v1h-1zM486.1 319.9h1v1h-1zM492.1 319.9h1v1h-1zM498.0 319.9h1v1h-1zM504.0 319.9h1v1h-1zM510.0 319.9h1v1h-1zM515.9 319.9h1v1h-1zM521.9 319.9h1v1h-1zM527.8 319.9h1v1h-1zM533.8 319.9h1v1h-1zM539.8 319.9h1v1h-1zM545.7 319.9h1v1h-1zM551.7 319.9h1v1h-1zM557.6 319.9h1v1h-1zM563.6 319.9h1v1h-1zM569.6 319.9h1v1h-1zM575.5 319.9h1v1h-1zM581.5 319.9h1v1h-1zM587.4 319.9h1v1h-1zM593.4 319.9h1v1h-1zM599.3 319.9h1v1h-1zM605.3 319.9h1v1h-1zM611.3 319.9h1v1h-1zM617.2 319.9h1v1h-1zM623.2 319.9h1v1h-1zM629.1 319.9h1v1h-1zM635.1 319.9h1v1h-1zM377.7 323.1h1v1h-1zM383.7 323.1h1v1h-1zM389.7 323.1h1v1h-1zM395.7 323.1h1v1h-1zM401.8 323.1h1v1h-1zM407.8 323.1h1v1h-1zM413.8 323.1h1v1h-1zM419.8 323.1h1v1h-1zM425.8 323.1h1v1h-1zM431.8 323.1h1v1h-1zM437.8 323.1h1v1h-1zM443.8 323.1h1v1h-1zM449.8 323.1h1v1h-1zM455.9 323.1h1v1h-1zM461.9 323.1h1v1h-1zM467.9 323.1h1v1h-1zM473.9 323.1h1v1h-1zM479.9 323.1h1v1h-1zM485.9 323.1h1v1h-1zM491.9 323.1h1v1h-1zM497.9 323.1h1v1h-1zM503.9 323.1h1v1h-1zM510.0 323.1h1v1h-1zM516.0 323.1h1v1h-1zM522.0 323.1h1v1h-1zM528.0 323.1h1v1h-1zM534.0 323.1h1v1h-1zM540.0 323.1h1v1h-1zM546.0 323.1h1v1h-1zM552.0 323.1h1v1h-1zM558.0 323.1h1v1h-1zM564.1 323.1h1v1h-1zM570.1 323.1h1v1h-1zM576.1 323.1h1v1h-1zM582.1 323.1h1v1h-1zM588.1 323.1h1v1h-1zM594.1 323.1h1v1h-1zM600.1 323.1h1v1h-1zM606.1 323.1h1v1h-1zM612.2 323.1h1v1h-1zM618.2 323.1h1v1h-1zM624.2 323.1h1v1h-1zM630.2 323.1h1v1h-1zM636.2 323.1h1v1h-1zM376.5 326.3h1v1h-1zM382.6 326.3h1v1h-1zM388.6 326.3h1v1h-1zM394.7 326.3h1v1h-1zM400.8 326.3h1v1h-1zM406.8 326.3h1v1h-1zM412.9 326.3h1v1h-1zM419.0 326.3h1v1h-1zM425.0 326.3h1v1h-1zM431.1 326.3h1v1h-1zM437.2 326.3h1v1h-1zM443.2 326.3h1v1h-1zM449.3 326.3h1v1h-1zM455.4 326.3h1v1h-1zM461.4 326.3h1v1h-1zM467.5 326.3h1v1h-1zM473.6 326.3h1v1h-1zM479.6 326.3h1v1h-1zM485.7 326.3h1v1h-1zM491.8 326.3h1v1h-1zM497.8 326.3h1v1h-1zM503.9 326.3h1v1h-1zM510.0 326.3h1v1h-1zM516.0 326.3h1v1h-1zM522.1 326.3h1v1h-1zM528.1 326.3h1v1h-1zM534.2 326.3h1v1h-1zM540.3 326.3h1v1h-1zM546.3 326.3h1v1h-1zM552.4 326.3h1v1h-1zM558.5 326.3h1v1h-1zM564.5 326.3h1v1h-1zM570.6 326.3h1v1h-1zM576.7 326.3h1v1h-1zM582.7 326.3h1v1h-1zM588.8 326.3h1v1h-1zM594.9 326.3h1v1h-1zM600.9 326.3h1v1h-1zM607.0 326.3h1v1h-1zM613.1 326.3h1v1h-1zM619.1 326.3h1v1h-1zM625.2 326.3h1v1h-1zM631.3 326.3h1v1h-1zM637.3 326.3h1v1h-1zM375.3 329.6h1v1h-1zM381.4 329.6h1v1h-1zM387.5 329.6h1v1h-1zM393.7 329.6h1v1h-1zM399.8 329.6h1v1h-1zM405.9 329.6h1v1h-1zM412.0 329.6h1v1h-1zM418.1 329.6h1v1h-1zM424.3 329.6h1v1h-1zM430.4 329.6h1v1h-1zM436.5 329.6h1v1h-1zM442.6 329.6h1v1h-1zM448.7 329.6h1v1h-1zM454.9 329.6h1v1h-1zM461.0 329.6h1v1h-1zM467.1 329.6h1v1h-1zM473.2 329.6h1v1h-1zM479.3 329.6h1v1h-1zM485.5 329.6h1v1h-1zM491.6 329.6h1v1h-1zM497.7 329.6h1v1h-1zM503.8 329.6h1v1h-1zM509.9 329.6h1v1h-1zM516.1 329.6h1v1h-1zM522.2 329.6h1v1h-1zM528.3 329.6h1v1h-1zM534.4 329.6h1v1h-1zM540.5 329.6h1v1h-1zM546.7 329.6h1v1h-1zM552.8 329.6h1v1h-1zM558.9 329.6h1v1h-1zM565.0 329.6h1v1h-1zM571.1 329.6h1v1h-1zM577.3 329.6h1v1h-1zM583.4 329.6h1v1h-1zM589.5 329.6h1v1h-1zM595.6 329.6h1v1h-1zM601.7 329.6h1v1h-1zM607.9 329.6h1v1h-1zM614.0 329.6h1v1h-1zM620.1 329.6h1v1h-1zM626.2 329.6h1v1h-1zM632.3 329.6h1v1h-1zM638.5 329.6h1v1h-1zM374.1 332.9h1v1h-1zM380.2 332.9h1v1h-1zM386.4 332.9h1v1h-1zM392.6 332.9h1v1h-1zM398.8 332.9h1v1h-1zM404.9 332.9h1v1h-1zM411.1 332.9h1v1h-1zM417.3 332.9h1v1h-1zM423.5 332.9h1v1h-1zM429.6 332.9h1v1h-1zM435.8 332.9h1v1h-1zM442.0 332.9h1v1h-1zM448.2 332.9h1v1h-1zM454.3 332.9h1v1h-1zM460.5 332.9h1v1h-1zM466.7 332.9h1v1h-1zM472.9 332.9h1v1h-1zM479.1 332.9h1v1h-1zM485.2 332.9h1v1h-1zM491.4 332.9h1v1h-1zM497.6 332.9h1v1h-1zM503.8 332.9h1v1h-1zM509.9 332.9h1v1h-1zM516.1 332.9h1v1h-1zM522.3 332.9h1v1h-1zM528.5 332.9h1v1h-1zM534.6 332.9h1v1h-1zM540.8 332.9h1v1h-1zM547.0 332.9h1v1h-1zM553.2 332.9h1v1h-1zM559.3 332.9h1v1h-1zM565.5 332.9h1v1h-1zM571.7 332.9h1v1h-1zM577.9 332.9h1v1h-1zM584.0 332.9h1v1h-1zM590.2 332.9h1v1h-1zM596.4 332.9h1v1h-1zM602.6 332.9h1v1h-1zM608.8 332.9h1v1h-1zM614.9 332.9h1v1h-1zM621.1 332.9h1v1h-1zM627.3 332.9h1v1h-1zM633.5 332.9h1v1h-1zM639.6 332.9h1v1h-1zM372.8 336.3h1v1h-1zM379.0 336.3h1v1h-1zM385.3 336.3h1v1h-1zM391.5 336.3h1v1h-1zM397.7 336.3h1v1h-1zM404.0 336.3h1v1h-1zM410.2 336.3h1v1h-1zM416.4 336.3h1v1h-1zM422.7 336.3h1v1h-1zM428.9 336.3h1v1h-1zM435.1 336.3h1v1h-1zM441.4 336.3h1v1h-1zM447.6 336.3h1v1h-1zM453.8 336.3h1v1h-1zM460.1 336.3h1v1h-1zM466.3 336.3h1v1h-1zM472.5 336.3h1v1h-1zM478.8 336.3h1v1h-1zM485.0 336.3h1v1h-1zM491.2 336.3h1v1h-1zM497.5 336.3h1v1h-1zM503.7 336.3h1v1h-1zM509.9 336.3h1v1h-1zM516.2 336.3h1v1h-1zM522.4 336.3h1v1h-1zM528.6 336.3h1v1h-1zM534.9 336.3h1v1h-1zM541.1 336.3h1v1h-1zM547.3 336.3h1v1h-1zM553.6 336.3h1v1h-1zM559.8 336.3h1v1h-1zM566.0 336.3h1v1h-1zM572.3 336.3h1v1h-1zM578.5 336.3h1v1h-1zM584.7 336.3h1v1h-1zM591.0 336.3h1v1h-1zM597.2 336.3h1v1h-1zM603.4 336.3h1v1h-1zM609.7 336.3h1v1h-1zM615.9 336.3h1v1h-1zM622.1 336.3h1v1h-1zM628.4 336.3h1v1h-1zM634.6 336.3h1v1h-1zM640.8 336.3h1v1h-1zM371.5 339.8h1v1h-1zM377.8 339.8h1v1h-1zM384.1 339.8h1v1h-1zM390.4 339.8h1v1h-1zM396.7 339.8h1v1h-1zM403.0 339.8h1v1h-1zM409.3 339.8h1v1h-1zM415.6 339.8h1v1h-1zM421.8 339.8h1v1h-1zM428.1 339.8h1v1h-1zM434.4 339.8h1v1h-1zM440.7 339.8h1v1h-1zM447.0 339.8h1v1h-1zM453.3 339.8h1v1h-1zM459.6 339.8h1v1h-1zM465.9 339.8h1v1h-1zM472.2 339.8h1v1h-1zM478.5 339.8h1v1h-1zM484.8 339.8h1v1h-1zM491.0 339.8h1v1h-1zM497.3 339.8h1v1h-1zM503.6 339.8h1v1h-1zM509.9 339.8h1v1h-1zM516.2 339.8h1v1h-1zM522.5 339.8h1v1h-1zM528.8 339.8h1v1h-1zM535.1 339.8h1v1h-1zM541.4 339.8h1v1h-1zM547.7 339.8h1v1h-1zM554.0 339.8h1v1h-1zM560.2 339.8h1v1h-1zM566.5 339.8h1v1h-1zM572.8 339.8h1v1h-1zM579.1 339.8h1v1h-1zM585.4 339.8h1v1h-1zM591.7 339.8h1v1h-1zM598.0 339.8h1v1h-1zM604.3 339.8h1v1h-1zM610.6 339.8h1v1h-1zM616.9 339.8h1v1h-1zM623.2 339.8h1v1h-1zM629.4 339.8h1v1h-1zM635.7 339.8h1v1h-1zM642.0 339.8h1v1h-1zM370.2 343.3h1v1h-1zM376.6 343.3h1v1h-1zM382.9 343.3h1v1h-1zM389.3 343.3h1v1h-1zM395.6 343.3h1v1h-1zM402.0 343.3h1v1h-1zM408.3 343.3h1v1h-1zM414.7 343.3h1v1h-1zM421.0 343.3h1v1h-1zM427.4 343.3h1v1h-1zM433.7 343.3h1v1h-1zM440.1 343.3h1v1h-1zM446.4 343.3h1v1h-1zM452.8 343.3h1v1h-1zM459.1 343.3h1v1h-1zM465.5 343.3h1v1h-1zM471.8 343.3h1v1h-1zM478.2 343.3h1v1h-1zM484.5 343.3h1v1h-1zM490.9 343.3h1v1h-1zM497.2 343.3h1v1h-1zM503.6 343.3h1v1h-1zM509.9 343.3h1v1h-1zM516.3 343.3h1v1h-1zM522.6 343.3h1v1h-1zM529.0 343.3h1v1h-1zM535.3 343.3h1v1h-1zM541.7 343.3h1v1h-1zM548.0 343.3h1v1h-1zM554.4 343.3h1v1h-1zM560.7 343.3h1v1h-1zM567.1 343.3h1v1h-1zM573.4 343.3h1v1h-1zM579.8 343.3h1v1h-1zM586.1 343.3h1v1h-1zM592.5 343.3h1v1h-1zM598.8 343.3h1v1h-1zM605.2 343.3h1v1h-1zM611.5 343.3h1v1h-1zM617.9 343.3h1v1h-1zM624.2 343.3h1v1h-1zM630.6 343.3h1v1h-1zM636.9 343.3h1v1h-1zM643.3 343.3h1v1h-1zM368.9 346.9h1v1h-1zM375.3 346.9h1v1h-1zM381.7 346.9h1v1h-1zM388.1 346.9h1v1h-1zM394.5 346.9h1v1h-1zM400.9 346.9h1v1h-1zM407.3 346.9h1v1h-1zM413.7 346.9h1v1h-1zM420.2 346.9h1v1h-1zM426.6 346.9h1v1h-1zM433.0 346.9h1v1h-1zM439.4 346.9h1v1h-1zM445.8 346.9h1v1h-1zM452.2 346.9h1v1h-1zM458.6 346.9h1v1h-1zM465.0 346.9h1v1h-1zM471.4 346.9h1v1h-1zM477.8 346.9h1v1h-1zM484.3 346.9h1v1h-1zM490.7 346.9h1v1h-1zM497.1 346.9h1v1h-1zM503.5 346.9h1v1h-1zM509.9 346.9h1v1h-1zM516.3 346.9h1v1h-1zM522.7 346.9h1v1h-1zM529.1 346.9h1v1h-1zM535.5 346.9h1v1h-1zM541.9 346.9h1v1h-1zM548.4 346.9h1v1h-1zM554.8 346.9h1v1h-1zM561.2 346.9h1v1h-1zM567.6 346.9h1v1h-1zM574.0 346.9h1v1h-1zM580.4 346.9h1v1h-1zM586.8 346.9h1v1h-1zM593.2 346.9h1v1h-1zM599.6 346.9h1v1h-1zM606.1 346.9h1v1h-1zM612.5 346.9h1v1h-1zM618.9 346.9h1v1h-1zM625.3 346.9h1v1h-1zM631.7 346.9h1v1h-1zM638.1 346.9h1v1h-1zM644.5 346.9h1v1h-1zM367.5 350.6h1v1h-1zM374.0 350.6h1v1h-1zM380.5 350.6h1v1h-1zM386.9 350.6h1v1h-1zM393.4 350.6h1v1h-1zM399.9 350.6h1v1h-1zM406.3 350.6h1v1h-1zM412.8 350.6h1v1h-1zM419.3 350.6h1v1h-1zM425.8 350.6h1v1h-1zM432.2 350.6h1v1h-1zM438.7 350.6h1v1h-1zM445.2 350.6h1v1h-1zM451.6 350.6h1v1h-1zM458.1 350.6h1v1h-1zM464.6 350.6h1v1h-1zM471.1 350.6h1v1h-1zM477.5 350.6h1v1h-1zM484.0 350.6h1v1h-1zM490.5 350.6h1v1h-1zM496.9 350.6h1v1h-1zM503.4 350.6h1v1h-1zM509.9 350.6h1v1h-1zM516.4 350.6h1v1h-1zM522.8 350.6h1v1h-1zM529.3 350.6h1v1h-1zM535.8 350.6h1v1h-1zM542.2 350.6h1v1h-1zM548.7 350.6h1v1h-1zM555.2 350.6h1v1h-1zM561.7 350.6h1v1h-1zM568.1 350.6h1v1h-1zM574.6 350.6h1v1h-1zM581.1 350.6h1v1h-1zM587.5 350.6h1v1h-1zM594.0 350.6h1v1h-1zM600.5 350.6h1v1h-1zM607.0 350.6h1v1h-1zM613.4 350.6h1v1h-1zM619.9 350.6h1v1h-1zM626.4 350.6h1v1h-1zM632.8 350.6h1v1h-1zM639.3 350.6h1v1h-1zM645.8 350.6h1v1h-1zM366.1 354.3h1v1h-1zM372.7 354.3h1v1h-1zM379.2 354.3h1v1h-1zM385.7 354.3h1v1h-1zM392.3 354.3h1v1h-1zM398.8 354.3h1v1h-1zM405.3 354.3h1v1h-1zM411.9 354.3h1v1h-1zM418.4 354.3h1v1h-1zM424.9 354.3h1v1h-1zM431.5 354.3h1v1h-1zM438.0 354.3h1v1h-1zM444.5 354.3h1v1h-1zM451.1 354.3h1v1h-1zM457.6 354.3h1v1h-1zM464.1 354.3h1v1h-1zM470.7 354.3h1v1h-1zM477.2 354.3h1v1h-1zM483.7 354.3h1v1h-1zM490.3 354.3h1v1h-1zM496.8 354.3h1v1h-1zM503.3 354.3h1v1h-1zM509.9 354.3h1v1h-1zM516.4 354.3h1v1h-1zM522.9 354.3h1v1h-1zM529.5 354.3h1v1h-1zM536.0 354.3h1v1h-1zM542.6 354.3h1v1h-1zM549.1 354.3h1v1h-1zM555.6 354.3h1v1h-1zM562.2 354.3h1v1h-1zM568.7 354.3h1v1h-1zM575.2 354.3h1v1h-1zM581.8 354.3h1v1h-1zM588.3 354.3h1v1h-1zM594.8 354.3h1v1h-1zM601.4 354.3h1v1h-1zM607.9 354.3h1v1h-1zM614.4 354.3h1v1h-1zM621.0 354.3h1v1h-1zM627.5 354.3h1v1h-1zM634.0 354.3h1v1h-1zM640.6 354.3h1v1h-1zM647.1 354.3h1v1h-1zM364.7 358.1h1v1h-1zM371.3 358.1h1v1h-1zM377.9 358.1h1v1h-1zM384.5 358.1h1v1h-1zM391.1 358.1h1v1h-1zM397.7 358.1h1v1h-1zM404.3 358.1h1v1h-1zM410.9 358.1h1v1h-1zM417.5 358.1h1v1h-1zM424.1 358.1h1v1h-1zM430.7 358.1h1v1h-1zM437.3 358.1h1v1h-1zM443.9 358.1h1v1h-1zM450.5 358.1h1v1h-1zM457.1 358.1h1v1h-1zM463.7 358.1h1v1h-1zM470.3 358.1h1v1h-1zM476.9 358.1h1v1h-1zM483.5 358.1h1v1h-1zM490.1 358.1h1v1h-1zM496.7 358.1h1v1h-1zM503.3 358.1h1v1h-1zM509.9 358.1h1v1h-1zM516.5 358.1h1v1h-1zM523.1 358.1h1v1h-1zM529.7 358.1h1v1h-1zM536.3 358.1h1v1h-1zM542.9 358.1h1v1h-1zM549.5 358.1h1v1h-1zM556.1 358.1h1v1h-1zM562.7 358.1h1v1h-1zM569.2 358.1h1v1h-1zM575.8 358.1h1v1h-1zM582.4 358.1h1v1h-1zM589.0 358.1h1v1h-1zM595.6 358.1h1v1h-1zM602.2 358.1h1v1h-1zM608.8 358.1h1v1h-1zM615.4 358.1h1v1h-1zM622.0 358.1h1v1h-1zM628.6 358.1h1v1h-1zM635.2 358.1h1v1h-1zM641.8 358.1h1v1h-1zM648.4 358.1h1v1h-1zM363.3 362.0h1v1h-1zM370.0 362.0h1v1h-1zM376.6 362.0h1v1h-1zM383.3 362.0h1v1h-1zM389.9 362.0h1v1h-1zM396.6 362.0h1v1h-1zM403.3 362.0h1v1h-1zM409.9 362.0h1v1h-1zM416.6 362.0h1v1h-1zM423.3 362.0h1v1h-1zM429.9 362.0h1v1h-1zM436.6 362.0h1v1h-1zM443.2 362.0h1v1h-1zM449.9 362.0h1v1h-1zM456.6 362.0h1v1h-1zM463.2 362.0h1v1h-1zM469.9 362.0h1v1h-1zM476.6 362.0h1v1h-1zM483.2 362.0h1v1h-1zM489.9 362.0h1v1h-1zM496.5 362.0h1v1h-1zM503.2 362.0h1v1h-1zM509.9 362.0h1v1h-1zM516.5 362.0h1v1h-1zM523.2 362.0h1v1h-1zM529.8 362.0h1v1h-1zM536.5 362.0h1v1h-1zM543.2 362.0h1v1h-1zM549.8 362.0h1v1h-1zM556.5 362.0h1v1h-1zM563.2 362.0h1v1h-1zM569.8 362.0h1v1h-1zM576.5 362.0h1v1h-1zM583.1 362.0h1v1h-1zM589.8 362.0h1v1h-1zM596.5 362.0h1v1h-1zM603.1 362.0h1v1h-1zM609.8 362.0h1v1h-1zM616.5 362.0h1v1h-1zM623.1 362.0h1v1h-1zM629.8 362.0h1v1h-1zM636.4 362.0h1v1h-1zM643.1 362.0h1v1h-1zM649.8 362.0h1v1h-1zM361.8 365.9h1v1h-1zM368.6 365.9h1v1h-1zM375.3 365.9h1v1h-1zM382.0 365.9h1v1h-1zM388.7 365.9h1v1h-1zM395.5 365.9h1v1h-1zM402.2 365.9h1v1h-1zM408.9 365.9h1v1h-1zM415.7 365.9h1v1h-1zM422.4 365.9h1v1h-1zM429.1 365.9h1v1h-1zM435.8 365.9h1v1h-1zM442.6 365.9h1v1h-1zM449.3 365.9h1v1h-1zM456.0 365.9h1v1h-1zM462.8 365.9h1v1h-1zM469.5 365.9h1v1h-1zM476.2 365.9h1v1h-1zM482.9 365.9h1v1h-1zM489.7 365.9h1v1h-1zM496.4 365.9h1v1h-1zM503.1 365.9h1v1h-1zM509.9 365.9h1v1h-1zM516.6 365.9h1v1h-1zM523.3 365.9h1v1h-1zM530.0 365.9h1v1h-1zM536.8 365.9h1v1h-1zM543.5 365.9h1v1h-1zM550.2 365.9h1v1h-1zM557.0 365.9h1v1h-1zM563.7 365.9h1v1h-1zM570.4 365.9h1v1h-1zM577.1 365.9h1v1h-1zM583.9 365.9h1v1h-1zM590.6 365.9h1v1h-1zM597.3 365.9h1v1h-1zM604.1 365.9h1v1h-1zM610.8 365.9h1v1h-1zM617.5 365.9h1v1h-1zM624.2 365.9h1v1h-1zM631.0 365.9h1v1h-1zM637.7 365.9h1v1h-1zM644.4 365.9h1v1h-1zM651.2 365.9h1v1h-1zM360.3 370.0h1v1h-1zM367.1 370.0h1v1h-1zM373.9 370.0h1v1h-1zM380.7 370.0h1v1h-1zM387.5 370.0h1v1h-1zM394.3 370.0h1v1h-1zM401.1 370.0h1v1h-1zM407.9 370.0h1v1h-1zM414.7 370.0h1v1h-1zM421.5 370.0h1v1h-1zM428.3 370.0h1v1h-1zM435.1 370.0h1v1h-1zM441.9 370.0h1v1h-1zM448.7 370.0h1v1h-1zM455.5 370.0h1v1h-1zM462.3 370.0h1v1h-1zM469.1 370.0h1v1h-1zM475.9 370.0h1v1h-1zM482.7 370.0h1v1h-1zM489.5 370.0h1v1h-1zM496.3 370.0h1v1h-1zM503.0 370.0h1v1h-1zM509.8 370.0h1v1h-1zM516.6 370.0h1v1h-1zM523.4 370.0h1v1h-1zM530.2 370.0h1v1h-1zM537.0 370.0h1v1h-1zM543.8 370.0h1v1h-1zM550.6 370.0h1v1h-1zM557.4 370.0h1v1h-1zM564.2 370.0h1v1h-1zM571.0 370.0h1v1h-1zM577.8 370.0h1v1h-1zM584.6 370.0h1v1h-1zM591.4 370.0h1v1h-1zM598.2 370.0h1v1h-1zM605.0 370.0h1v1h-1zM611.8 370.0h1v1h-1zM618.6 370.0h1v1h-1zM625.4 370.0h1v1h-1zM632.2 370.0h1v1h-1zM639.0 370.0h1v1h-1zM645.8 370.0h1v1h-1zM652.6 370.0h1v1h-1zM358.8 374.1h1v1h-1zM365.7 374.1h1v1h-1zM372.5 374.1h1v1h-1zM379.4 374.1h1v1h-1zM386.3 374.1h1v1h-1zM393.1 374.1h1v1h-1zM400.0 374.1h1v1h-1zM406.9 374.1h1v1h-1zM413.7 374.1h1v1h-1zM420.6 374.1h1v1h-1zM427.5 374.1h1v1h-1zM434.3 374.1h1v1h-1zM441.2 374.1h1v1h-1zM448.0 374.1h1v1h-1zM454.9 374.1h1v1h-1zM461.8 374.1h1v1h-1zM468.6 374.1h1v1h-1zM475.5 374.1h1v1h-1zM482.4 374.1h1v1h-1zM489.2 374.1h1v1h-1zM496.1 374.1h1v1h-1zM503.0 374.1h1v1h-1zM509.8 374.1h1v1h-1zM516.7 374.1h1v1h-1zM523.6 374.1h1v1h-1zM530.4 374.1h1v1h-1zM537.3 374.1h1v1h-1zM544.2 374.1h1v1h-1zM551.0 374.1h1v1h-1zM557.9 374.1h1v1h-1zM564.8 374.1h1v1h-1zM571.6 374.1h1v1h-1zM578.5 374.1h1v1h-1zM585.3 374.1h1v1h-1zM592.2 374.1h1v1h-1zM599.1 374.1h1v1h-1zM605.9 374.1h1v1h-1zM612.8 374.1h1v1h-1zM619.7 374.1h1v1h-1zM626.5 374.1h1v1h-1zM633.4 374.1h1v1h-1zM640.3 374.1h1v1h-1zM647.1 374.1h1v1h-1zM654.0 374.1h1v1h-1z" fill="#8a8a8a"/><line x1="403" y1="215" x2="405.5" y2="248" stroke="#9a9a9a" stroke-width="0.8"/><path d="M396.5 198.5 L396.5 206 L398.3 204.3 L399.8 207.4 L400.8 206.9 L399.4 203.8 L401.8 203.6 Z" fill="#fff" stroke="#777" stroke-width="0.6"/><defs><linearGradient id="p1" gradientUnits="userSpaceOnUse" x1="0" y1="218" x2="0" y2="344"><stop offset="0" stop-color="#e00800"/><stop offset="0.06" stop-color="#ff2000"/><stop offset="0.16" stop-color="#ff7000"/><stop offset="0.28" stop-color="#ffc000"/><stop offset="0.34" stop-color="#f8e800"/><stop offset="0.42" stop-color="#a8e010"/><stop offset="0.5" stop-color="#40cc30"/><stop offset="0.58" stop-color="#20d8a0"/><stop offset="0.65" stop-color="#00d0f8"/><stop offset="0.74" stop-color="#0098ff"/><stop offset="0.84" stop-color="#0040e8"/><stop offset="0.93" stop-color="#0010a0"/><stop offset="1" stop-color="#000060"/></linearGradient><linearGradient id="p2" gradientUnits="userSpaceOnUse" x1="0" y1="186" x2="0" y2="303"><stop offset="0" stop-color="#e00800"/><stop offset="0.06" stop-color="#ff2000"/><stop offset="0.16" stop-color="#ff7000"/><stop offset="0.28" stop-color="#ffc000"/><stop offset="0.34" stop-color="#f8e800"/><stop offset="0.42" stop-color="#a8e010"/><stop offset="0.5" stop-color="#40cc30"/><stop offset="0.58" stop-color="#20d8a0"/><stop offset="0.65" stop-color="#00d0f8"/><stop offset="0.74" stop-color="#0098ff"/><stop offset="0.84" stop-color="#0040e8"/><stop offset="0.93" stop-color="#0010a0"/><stop offset="1" stop-color="#000060"/></linearGradient><linearGradient id="p3" gradientUnits="userSpaceOnUse" x1="0" y1="176" x2="0" y2="287"><stop offset="0" stop-color="#e00800"/><stop offset="0.06" stop-color="#ff2000"/><stop offset="0.16" stop-color="#ff7000"/><stop offset="0.28" stop-color="#ffc000"/><stop offset="0.34" stop-color="#f8e800"/><stop offset="0.42" stop-color="#a8e010"/><stop offset="0.5" stop-color="#40cc30"/><stop offset="0.58" stop-color="#20d8a0"/><stop offset="0.65" stop-color="#00d0f8"/><stop offset="0.74" stop-color="#0098ff"/><stop offset="0.84" stop-color="#0040e8"/><stop offset="0.93" stop-color="#0010a0"/><stop offset="1" stop-color="#000060"/></linearGradient><clipPath id="c1"><path d="M432 223 C432 219 436 218 442 218.3 C448 218.5 452 222 455 235 C459 255 464 285 472 305 C475 312 479 318 483 322 L483.5 338 L478 339 L477 341 L462 342 L461 345 L444 345 L440 341 L436 340 L435 337 L431 338 L432 330 C431 300 431.5 260 432 223 Z"/></clipPath><clipPath id="c2"><path d="M453 215 C454 198 460 187 468 186.5 C474 187 479 197 482 215 C486 240 492 265 498 288 L502 290 L502 297 L497 298 L496 301 L490 302 L489 304 L470 304 L455 300 L453 290 Z"/></clipPath><clipPath id="c3"><path d="M547.5 179.5 L560.5 175.5 C565 181 569 195 571 215 C573 240 574 262 575 280 L577 284 L576 287 L548 288 L541 287 L536 283 C537 262 539 238 542 215 C544 197 546 186 547.5 179.5 Z"/></clipPath></defs><path d="M453 215 C454 198 460 187 468 186.5 C474 187 479 197 482 215 C486 240 492 265 498 288 L502 290 L502 297 L497 298 L496 301 L490 302 L489 304 L470 304 L455 300 L453 290 Z" fill="url(#p2)"/><g clip-path="url(#c2)"><path d="M450.0 186 L452.3 186 L451.1 305 L447.4 305 Z" fill="#fff" opacity="0.03"/><path d="M454.1 186 L456.6 186 L455.2 305 L451.4 305 Z" fill="#000" opacity="0.02"/><path d="M458.1 186 L459.8 186 L462.8 305 L460.1 305 Z" fill="#000" opacity="0.03"/><path d="M460.6 186 L462.7 186 L464.4 305 L461.1 305 Z" fill="#fff" opacity="0.06"/><path d="M464.2 186 L468.1 186 L469.2 305 L462.9 305 Z" fill="#fff" opacity="0.02"/><path d="M469.0 186 L470.8 186 L469.9 305 L467.1 305 Z" fill="#fff" opacity="0.04"/><path d="M472.7 186 L475.8 186 L475.1 305 L470.1 305 Z" fill="#000" opacity="0.05"/><path d="M476.5 186 L478.5 186 L478.6 305 L475.4 305 Z" fill="#000" opacity="0.07"/><path d="M480.5 186 L483.1 186 L485.9 305 L481.7 305 Z" fill="#fff" opacity="0.04"/><path d="M484.2 186 L487.1 186 L490.3 305 L485.6 305 Z" fill="#fff" opacity="0.06"/><path d="M488.4 186 L492.3 186 L496.2 305 L489.9 305 Z" fill="#000" opacity="0.03"/><path d="M493.2 186 L495.9 186 L499.1 305 L494.8 305 Z" fill="#fff" opacity="0.02"/><path d="M497.8 186 L501.5 186 L504.3 305 L498.4 305 Z" fill="#fff" opacity="0.04"/><path d="M503.5 186 L506.1 186 L507.5 305 L503.3 305 Z" fill="#fff" opacity="0.08"/></g><path d="M547.5 179.5 L560.5 175.5 C565 181 569 195 571 215 C573 240 574 262 575 280 L577 284 L576 287 L548 288 L541 287 L536 283 C537 262 539 238 542 215 C544 197 546 186 547.5 179.5 Z" fill="url(#p3)"/><g clip-path="url(#c3)"><path d="M534.0 175 L535.7 175 L539.6 290 L537.0 290 Z" fill="#fff" opacity="0.07"/><path d="M538.2 175 L540.4 175 L538.9 290 L535.3 290 Z" fill="#fff" opacity="0.05"/><path d="M542.1 175 L544.0 175 L546.8 290 L543.7 290 Z" fill="#000" opacity="0.03"/><path d="M544.8 175 L546.9 175 L545.7 290 L542.3 290 Z" fill="#fff" opacity="0.05"/><path d="M548.6 175 L551.4 175 L555.3 290 L550.7 290 Z" fill="#fff" opacity="0.08"/><path d="M552.6 175 L555.2 175 L559.4 290 L555.4 290 Z" fill="#fff" opacity="0.05"/><path d="M556.0 175 L558.0 175 L559.1 290 L556.0 290 Z" fill="#000" opacity="0.04"/><path d="M560.0 175 L562.1 175 L562.6 290 L559.2 290 Z" fill="#000" opacity="0.02"/><path d="M564.0 175 L567.9 175 L570.9 290 L564.7 290 Z" fill="#000" opacity="0.07"/><path d="M570.1 175 L571.7 175 L575.0 290 L572.3 290 Z" fill="#fff" opacity="0.08"/><path d="M574.2 175 L576.7 175 L579.0 290 L575.0 290 Z" fill="#000" opacity="0.05"/><path d="M577.4 175 L579.0 175 L579.1 290 L576.4 290 Z" fill="#000" opacity="0.03"/><path d="M579.7 175 L581.2 175 L581.3 290 L578.8 290 Z" fill="#000" opacity="0.03"/></g><path d="M432 223 C432 219 436 218 442 218.3 C448 218.5 452 222 455 235 C459 255 464 285 472 305 C475 312 479 318 483 322 L483.5 338 L478 339 L477 341 L462 342 L461 345 L444 345 L440 341 L436 340 L435 337 L431 338 L432 330 C431 300 431.5 260 432 223 Z" fill="url(#p1)"/><g clip-path="url(#c1)"><path d="M429.0 217 L432.7 217 L433.4 346 L427.5 346 Z" fill="#000" opacity="0.06"/><path d="M434.1 217 L436.5 217 L440.9 346 L437.0 346 Z" fill="#fff" opacity="0.03"/><path d="M438.1 217 L440.8 217 L441.5 346 L437.2 346 Z" fill="#000" opacity="0.03"/><path d="M442.0 217 L445.6 217 L450.4 346 L444.7 346 Z" fill="#000" opacity="0.03"/><path d="M447.4 217 L449.3 217 L450.5 346 L447.6 346 Z" fill="#000" opacity="0.06"/><path d="M452.2 217 L455.9 217 L457.3 346 L451.4 346 Z" fill="#000" opacity="0.07"/><path d="M456.8 217 L460.2 217 L461.2 346 L455.8 346 Z" fill="#fff" opacity="0.06"/><path d="M461.3 217 L464.8 217 L468.8 346 L463.1 346 Z" fill="#fff" opacity="0.09"/><path d="M467.3 217 L470.7 217 L471.8 346 L466.5 346 Z" fill="#000" opacity="0.04"/><path d="M471.3 217 L472.8 217 L474.9 346 L472.4 346 Z" fill="#000" opacity="0.04"/><path d="M475.7 217 L478.3 217 L482.6 346 L478.5 346 Z" fill="#fff" opacity="0.09"/><path d="M479.8 217 L481.8 217 L481.3 346 L478.0 346 Z" fill="#000" opacity="0.04"/><path d="M483.9 217 L487.6 217 L490.8 346 L484.8 346 Z" fill="#000" opacity="0.08"/></g></svg><svg class="a" style="left:681px;top:49px" width="8" height="8"><rect width="7" height="7" fill="#ffffff" opacity="0.9"/><rect x="0" y="0" width="3.5" height="3.5" fill="#5ab8f8"/><rect x="3.5" y="3.5" width="3.5" height="3.5" fill="#1a7ad8"/></svg><div class="t" style="left:691px;top:51px;font-size:6.25px;letter-spacing:0.3px;color:#d8ecff">曲线视图</div><svg class="a" style="left:717px;top:50px" width="8" height="8"><path d="M1.5 1.5l5 5M6.5 1.5l-5 5" stroke="#fff" stroke-width="0.9"/></svg><svg class="a" style="left:981px;top:48px" width="22" height="11"><path d="M0.6 4.8 L3.2 2.2 M4.6 8.6 L7.2 6" stroke="#8c8c8c" stroke-width="1.4" stroke-linecap="round"/><circle cx="5.7" cy="3.6" r="1.05" fill="#1a1a1a"/><circle cx="1.9" cy="7.4" r="1.05" fill="#1a1a1a"/><circle cx="15.5" cy="5.3" r="3.1" fill="none" stroke="#4a4a4a" stroke-width="1.3"/><path d="M15.5 1.6 V3.3 M15.5 7.3 V9 M11.8 5.3 H13.5 M17.5 5.3 H19.2" stroke="#efefef" stroke-width="1"/><circle cx="15.5" cy="5.3" r="0.95" fill="#1a1a1a"/></svg><svg class="a" style="left:677px;top:61px" width="323" height="480" viewBox="677 61 323 480"><rect x="683.5" y="70.5" width="313" height="150" fill="none" stroke="#dadada" stroke-width="1"/><rect x="686" y="74" width="308" height="144" fill="#ffffff"/><rect x="687" y="66" width="31" height="8" fill="#f0f0f0"/><text x="688" y="73" font-family="Liberation Sans" font-size="6.25" letter-spacing="0.3" font-weight="600" fill="#333">压缩(raw)</text><text x="704.0" y="209.20" text-anchor="end" font-family="Liberation Sans" font-size="6.2" letter-spacing="-0.15" fill="#222">0</text><text x="951" y="209.20" font-family="Liberation Sans" font-size="6.2" fill="#222">0</text><line x1="707.5" y1="207.00" x2="709.5" y2="207.00" stroke="#222" stroke-width="0.9"/><line x1="946" y1="207.00" x2="948" y2="207.00" stroke="#222" stroke-width="0.9"/><line x1="707.5" y1="184.25" x2="948" y2="184.25" stroke="#8e8e8e" stroke-width="0.7" stroke-dasharray="1 0.5"/><text x="704.0" y="186.45" text-anchor="end" font-family="Liberation Sans" font-size="6.2" letter-spacing="-0.15" fill="#222">5000</text><text x="951" y="186.45" font-family="Liberation Sans" font-size="6.2" fill="#222">5000</text><line x1="707.5" y1="184.25" x2="709.5" y2="184.25" stroke="#222" stroke-width="0.9"/><line x1="946" y1="184.25" x2="948" y2="184.25" stroke="#222" stroke-width="0.9"/><line x1="707.5" y1="161.50" x2="948" y2="161.50" stroke="#8e8e8e" stroke-width="0.7" stroke-dasharray="1 0.5"/><text x="704.0" y="163.70" text-anchor="end" font-family="Liberation Sans" font-size="6.2" letter-spacing="-0.15" fill="#222">10000</text><text x="951" y="163.70" font-family="Liberation Sans" font-size="6.2" fill="#222">10000</text><line x1="707.5" y1="161.50" x2="709.5" y2="161.50" stroke="#222" stroke-width="0.9"/><line x1="946" y1="161.50" x2="948" y2="161.50" stroke="#222" stroke-width="0.9"/><line x1="707.5" y1="138.75" x2="948" y2="138.75" stroke="#8e8e8e" stroke-width="0.7" stroke-dasharray="1 0.5"/><text x="704.0" y="140.95" text-anchor="end" font-family="Liberation Sans" font-size="6.2" letter-spacing="-0.15" fill="#222">15000</text><text x="951" y="140.95" font-family="Liberation Sans" font-size="6.2" fill="#222">15000</text><line x1="707.5" y1="138.75" x2="709.5" y2="138.75" stroke="#222" stroke-width="0.9"/><line x1="946" y1="138.75" x2="948" y2="138.75" stroke="#222" stroke-width="0.9"/><line x1="707.5" y1="116.00" x2="948" y2="116.00" stroke="#8e8e8e" stroke-width="0.7" stroke-dasharray="1 0.5"/><text x="704.0" y="118.20" text-anchor="end" font-family="Liberation Sans" font-size="6.2" letter-spacing="-0.15" fill="#222">20000</text><text x="951" y="118.20" font-family="Liberation Sans" font-size="6.2" fill="#222">20000</text><line x1="707.5" y1="116.00" x2="709.5" y2="116.00" stroke="#222" stroke-width="0.9"/><line x1="946" y1="116.00" x2="948" y2="116.00" stroke="#222" stroke-width="0.9"/><line x1="707.5" y1="93.25" x2="948" y2="93.25" stroke="#8e8e8e" stroke-width="0.7" stroke-dasharray="1 0.5"/><text x="704.0" y="95.45" text-anchor="end" font-family="Liberation Sans" font-size="6.2" letter-spacing="-0.15" fill="#222">25000</text><text x="951" y="95.45" font-family="Liberation Sans" font-size="6.2" fill="#222">25000</text><line x1="707.5" y1="93.25" x2="709.5" y2="93.25" stroke="#222" stroke-width="0.9"/><line x1="946" y1="93.25" x2="948" y2="93.25" stroke="#222" stroke-width="0.9"/><line x1="719" y1="82" x2="719" y2="207" stroke="#8e8e8e" stroke-width="0.7" stroke-dasharray="1 0.5"/><text x="719" y="213.60" text-anchor="middle" font-family="Liberation Sans" font-size="6.2" fill="#222">00:00:14</text><line x1="719" y1="204.5" x2="719" y2="207" stroke="#222" stroke-width="0.9"/><line x1="780" y1="82" x2="780" y2="207" stroke="#8e8e8e" stroke-width="0.7" stroke-dasharray="1 0.5"/><text x="780" y="213.60" text-anchor="middle" font-family="Liberation Sans" font-size="6.2" fill="#222">00:00:16</text><line x1="780" y1="204.5" x2="780" y2="207" stroke="#222" stroke-width="0.9"/><line x1="840" y1="82" x2="840" y2="207" stroke="#8e8e8e" stroke-width="0.7" stroke-dasharray="1 0.5"/><text x="840" y="213.60" text-anchor="middle" font-family="Liberation Sans" font-size="6.2" fill="#222">00:00:18</text><line x1="840" y1="204.5" x2="840" y2="207" stroke="#222" stroke-width="0.9"/><line x1="900" y1="82" x2="900" y2="207" stroke="#8e8e8e" stroke-width="0.7" stroke-dasharray="1 0.5"/><text x="900" y="213.60" text-anchor="middle" font-family="Liberation Sans" font-size="6.2" fill="#222">00:00:20</text><line x1="900" y1="204.5" x2="900" y2="207" stroke="#222" stroke-width="0.9"/><line x1="707.5" y1="83.00" x2="708.7" y2="83.00" stroke="#222" stroke-width="0.7"/><line x1="946.8" y1="83.00" x2="948" y2="83.00" stroke="#222" stroke-width="0.7"/><line x1="707.5" y1="87.55" x2="708.7" y2="87.55" stroke="#222" stroke-width="0.7"/><line x1="946.8" y1="87.55" x2="948" y2="87.55" stroke="#222" stroke-width="0.7"/><line x1="707.5" y1="92.10" x2="708.7" y2="92.10" stroke="#222" stroke-width="0.7"/><line x1="946.8" y1="92.10" x2="948" y2="92.10" stroke="#222" stroke-width="0.7"/><line x1="707.5" y1="96.65" x2="708.7" y2="96.65" stroke="#222" stroke-width="0.7"/><line x1="946.8" y1="96.65" x2="948" y2="96.65" stroke="#222" stroke-width="0.7"/><line x1="707.5" y1="101.20" x2="708.7" y2="101.20" stroke="#222" stroke-width="0.7"/><line x1="946.8" y1="101.20" x2="948" y2="101.20" stroke="#222" stroke-width="0.7"/><line x1="707.5" y1="105.75" x2="708.7" y2="105.75" stroke="#222" stroke-width="0.7"/><line x1="946.8" y1="105.75" x2="948" y2="105.75" stroke="#222" stroke-width="0.7"/><line x1="707.5" y1="110.30" x2="708.7" y2="110.30" stroke="#222" stroke-width="0.7"/><line x1="946.8" y1="110.30" x2="948" y2="110.30" stroke="#222" stroke-width="0.7"/><line x1="707.5" y1="114.85" x2="708.7" y2="114.85" stroke="#222" stroke-width="0.7"/><line x1="946.8" y1="114.85" x2="948" y2="114.85" stroke="#222" stroke-width="0.7"/><line x1="707.5" y1="119.40" x2="708.7" y2="119.40" stroke="#222" stroke-width="0.7"/><line x1="946.8" y1="119.40" x2="948" y2="119.40" stroke="#222" stroke-width="0.7"/><line x1="707.5" y1="123.95" x2="708.7" y2="123.95" stroke="#222" stroke-width="0.7"/><line x1="946.8" y1="123.95" x2="948" y2="123.95" stroke="#222" stroke-width="0.7"/><line x1="707.5" y1="128.50" x2="708.7" y2="128.50" stroke="#222" stroke-width="0.7"/><line x1="946.8" y1="128.50" x2="948" y2="128.50" stroke="#222" stroke-width="0.7"/><line x1="707.5" y1="133.05" x2="708.7" y2="133.05" stroke="#222" stroke-width="0.7"/><line x1="946.8" y1="133.05" x2="948" y2="133.05" stroke="#222" stroke-width="0.7"/><line x1="707.5" y1="137.60" x2="708.7" y2="137.60" stroke="#222" stroke-width="0.7"/><line x1="946.8" y1="137.60" x2="948" y2="137.60" stroke="#222" stroke-width="0.7"/><line x1="707.5" y1="142.15" x2="708.7" y2="142.15" stroke="#222" stroke-width="0.7"/><line x1="946.8" y1="142.15" x2="948" y2="142.15" stroke="#222" stroke-width="0.7"/><line x1="707.5" y1="146.70" x2="708.7" y2="146.70" stroke="#222" stroke-width="0.7"/><line x1="946.8" y1="146.70" x2="948" y2="146.70" stroke="#222" stroke-width="0.7"/><line x1="707.5" y1="151.25" x2="708.7" y2="151.25" stroke="#222" stroke-width="0.7"/><line x1="946.8" y1="151.25" x2="948" y2="151.25" stroke="#222" stroke-width="0.7"/><line x1="707.5" y1="155.80" x2="708.7" y2="155.80" stroke="#222" stroke-width="0.7"/><line x1="946.8" y1="155.80" x2="948" y2="155.80" stroke="#222" stroke-width="0.7"/><line x1="707.5" y1="160.35" x2="708.7" y2="160.35" stroke="#222" stroke-width="0.7"/><line x1="946.8" y1="160.35" x2="948" y2="160.35" stroke="#222" stroke-width="0.7"/><line x1="707.5" y1="164.90" x2="708.7" y2="164.90" stroke="#222" stroke-width="0.7"/><line x1="946.8" y1="164.90" x2="948" y2="164.90" stroke="#222" stroke-width="0.7"/><line x1="707.5" y1="169.45" x2="708.7" y2="169.45" stroke="#222" stroke-width="0.7"/><line x1="946.8" y1="169.45" x2="948" y2="169.45" stroke="#222" stroke-width="0.7"/><line x1="707.5" y1="174.00" x2="708.7" y2="174.00" stroke="#222" stroke-width="0.7"/><line x1="946.8" y1="174.00" x2="948" y2="174.00" stroke="#222" stroke-width="0.7"/><line x1="707.5" y1="178.55" x2="708.7" y2="178.55" stroke="#222" stroke-width="0.7"/><line x1="946.8" y1="178.55" x2="948" y2="178.55" stroke="#222" stroke-width="0.7"/><line x1="707.5" y1="183.10" x2="708.7" y2="183.10" stroke="#222" stroke-width="0.7"/><line x1="946.8" y1="183.10" x2="948" y2="183.10" stroke="#222" stroke-width="0.7"/><line x1="707.5" y1="187.65" x2="708.7" y2="187.65" stroke="#222" stroke-width="0.7"/><line x1="946.8" y1="187.65" x2="948" y2="187.65" stroke="#222" stroke-width="0.7"/><line x1="707.5" y1="192.20" x2="708.7" y2="192.20" stroke="#222" stroke-width="0.7"/><line x1="946.8" y1="192.20" x2="948" y2="192.20" stroke="#222" stroke-width="0.7"/><line x1="707.5" y1="196.75" x2="708.7" y2="196.75" stroke="#222" stroke-width="0.7"/><line x1="946.8" y1="196.75" x2="948" y2="196.75" stroke="#222" stroke-width="0.7"/><line x1="707.5" y1="201.30" x2="708.7" y2="201.30" stroke="#222" stroke-width="0.7"/><line x1="946.8" y1="201.30" x2="948" y2="201.30" stroke="#222" stroke-width="0.7"/><line x1="707.5" y1="205.85" x2="708.7" y2="205.85" stroke="#222" stroke-width="0.7"/><line x1="946.8" y1="205.85" x2="948" y2="205.85" stroke="#222" stroke-width="0.7"/><line x1="708.50" y1="205.8" x2="708.50" y2="207" stroke="#222" stroke-width="0.7"/><line x1="723.70" y1="205.8" x2="723.70" y2="207" stroke="#222" stroke-width="0.7"/><line x1="738.90" y1="205.8" x2="738.90" y2="207" stroke="#222" stroke-width="0.7"/><line x1="754.10" y1="205.8" x2="754.10" y2="207" stroke="#222" stroke-width="0.7"/><line x1="769.30" y1="205.8" x2="769.30" y2="207" stroke="#222" stroke-width="0.7"/><line x1="784.50" y1="205.8" x2="784.50" y2="207" stroke="#222" stroke-width="0.7"/><line x1="799.70" y1="205.8" x2="799.70" y2="207" stroke="#222" stroke-width="0.7"/><line x1="814.90" y1="205.8" x2="814.90" y2="207" stroke="#222" stroke-width="0.7"/><line x1="830.10" y1="205.8" x2="830.10" y2="207" stroke="#222" stroke-width="0.7"/><line x1="845.30" y1="205.8" x2="845.30" y2="207" stroke="#222" stroke-width="0.7"/><line x1="860.50" y1="205.8" x2="860.50" y2="207" stroke="#222" stroke-width="0.7"/><line x1="875.70" y1="205.8" x2="875.70" y2="207" stroke="#222" stroke-width="0.7"/><line x1="890.90" y1="205.8" x2="890.90" y2="207" stroke="#222" stroke-width="0.7"/><line x1="906.10" y1="205.8" x2="906.10" y2="207" stroke="#222" stroke-width="0.7"/><line x1="921.30" y1="205.8" x2="921.30" y2="207" stroke="#222" stroke-width="0.7"/><line x1="936.50" y1="205.8" x2="936.50" y2="207" stroke="#222" stroke-width="0.7"/><path d="M707.5 82 V207 H948 M948 82 V207" fill="none" stroke="#333" stroke-width="0.9"/><polyline points="707.2,107.4 712.4,110.4 716.3,108.1 720.2,105.2 722.8,106.2 725.4,109.1 727.3,106.8 730.6,109.1 733.8,106.5 737.7,106.8 742.9,104.8 748.1,103.9 752.0,102.6 757.2,103.2 761.1,102.6 763.7,106.1 768.9,105.2 772.8,107.8 779.3,106.5 783.9,107.8 788.4,113.9 793.0,113.0 797.5,119.8 800.8,118.8 803.4,120.1 807.9,116.2 811.8,112.6 818.3,112.6 822.2,114.3 825.5,118.5 827.6,116.9 829.6,119.1 834.8,116.2 836.7,129.2 839.3,124.7 844.5,117.8 847.1,119.1 850.4,116.9 853.6,116.9 857.5,115.6 861.4,116.9 863.4,119.9 866.6,118.2 874.4,116.2 880.9,113.0 890.0,111.7 896.5,110.0 906.9,108.4 918.6,108.8 923.8,107.1 932.9,106.2 940.7,106.5 944.0,107.5 947.9,106.5" fill="none" stroke="#22cc22" stroke-width="1.3" stroke-linejoin="round"/><path d="M948.5 106.5 L955 103.0 L955 110.0 Z" fill="#22cc22"/><rect x="955.5" y="103.0" width="29" height="7" fill="#fff" stroke="#22cc22" stroke-width="1"/><text x="956.5" y="108.8" font-family="Liberation Mono" font-size="6.2" fill="#222" letter-spacing="-0.3">21989.00</text><rect x="683.5" y="228.0" width="313" height="150" fill="none" stroke="#dadada" stroke-width="1"/><rect x="686" y="231.5" width="308" height="144" fill="#ffffff"/><rect x="687" y="223.5" width="31" height="8" fill="#f0f0f0"/><text x="688" y="230.5" font-family="Liberation Sans" font-size="6.25" letter-spacing="0.3" font-weight="600" fill="#333">总力(raw)</text><text x="704.0" y="366.70" text-anchor="end" font-family="Liberation Sans" font-size="6.2" letter-spacing="-0.15" fill="#222">0</text><text x="951" y="366.70" font-family="Liberation Sans" font-size="6.2" fill="#222">0</text><line x1="707.5" y1="364.50" x2="709.5" y2="364.50" stroke="#222" stroke-width="0.9"/><line x1="946" y1="364.50" x2="948" y2="364.50" stroke="#222" stroke-width="0.9"/><line x1="707.5" y1="341.75" x2="948" y2="341.75" stroke="#8e8e8e" stroke-width="0.7" stroke-dasharray="1 0.5"/><text x="704.0" y="343.95" text-anchor="end" font-family="Liberation Sans" font-size="6.2" letter-spacing="-0.15" fill="#222">5000</text><text x="951" y="343.95" font-family="Liberation Sans" font-size="6.2" fill="#222">5000</text><line x1="707.5" y1="341.75" x2="709.5" y2="341.75" stroke="#222" stroke-width="0.9"/><line x1="946" y1="341.75" x2="948" y2="341.75" stroke="#222" stroke-width="0.9"/><line x1="707.5" y1="319.00" x2="948" y2="319.00" stroke="#8e8e8e" stroke-width="0.7" stroke-dasharray="1 0.5"/><text x="704.0" y="321.20" text-anchor="end" font-family="Liberation Sans" font-size="6.2" letter-spacing="-0.15" fill="#222">10000</text><text x="951" y="321.20" font-family="Liberation Sans" font-size="6.2" fill="#222">10000</text><line x1="707.5" y1="319.00" x2="709.5" y2="319.00" stroke="#222" stroke-width="0.9"/><line x1="946" y1="319.00" x2="948" y2="319.00" stroke="#222" stroke-width="0.9"/><line x1="707.5" y1="296.25" x2="948" y2="296.25" stroke="#8e8e8e" stroke-width="0.7" stroke-dasharray="1 0.5"/><text x="704.0" y="298.45" text-anchor="end" font-family="Liberation Sans" font-size="6.2" letter-spacing="-0.15" fill="#222">15000</text><text x="951" y="298.45" font-family="Liberation Sans" font-size="6.2" fill="#222">15000</text><line x1="707.5" y1="296.25" x2="709.5" y2="296.25" stroke="#222" stroke-width="0.9"/><line x1="946" y1="296.25" x2="948" y2="296.25" stroke="#222" stroke-width="0.9"/><line x1="707.5" y1="273.50" x2="948" y2="273.50" stroke="#8e8e8e" stroke-width="0.7" stroke-dasharray="1 0.5"/><text x="704.0" y="275.70" text-anchor="end" font-family="Liberation Sans" font-size="6.2" letter-spacing="-0.15" fill="#222">20000</text><text x="951" y="275.70" font-family="Liberation Sans" font-size="6.2" fill="#222">20000</text><line x1="707.5" y1="273.50" x2="709.5" y2="273.50" stroke="#222" stroke-width="0.9"/><line x1="946" y1="273.50" x2="948" y2="273.50" stroke="#222" stroke-width="0.9"/><line x1="707.5" y1="250.75" x2="948" y2="250.75" stroke="#8e8e8e" stroke-width="0.7" stroke-dasharray="1 0.5"/><text x="704.0" y="252.95" text-anchor="end" font-family="Liberation Sans" font-size="6.2" letter-spacing="-0.15" fill="#222">25000</text><text x="951" y="252.95" font-family="Liberation Sans" font-size="6.2" fill="#222">25000</text><line x1="707.5" y1="250.75" x2="709.5" y2="250.75" stroke="#222" stroke-width="0.9"/><line x1="946" y1="250.75" x2="948" y2="250.75" stroke="#222" stroke-width="0.9"/><line x1="719" y1="239.5" x2="719" y2="364.5" stroke="#8e8e8e" stroke-width="0.7" stroke-dasharray="1 0.5"/><text x="719" y="371.10" text-anchor="middle" font-family="Liberation Sans" font-size="6.2" fill="#222">00:00:14</text><line x1="719" y1="362.0" x2="719" y2="364.5" stroke="#222" stroke-width="0.9"/><line x1="780" y1="239.5" x2="780" y2="364.5" stroke="#8e8e8e" stroke-width="0.7" stroke-dasharray="1 0.5"/><text x="780" y="371.10" text-anchor="middle" font-family="Liberation Sans" font-size="6.2" fill="#222">00:00:16</text><line x1="780" y1="362.0" x2="780" y2="364.5" stroke="#222" stroke-width="0.9"/><line x1="840" y1="239.5" x2="840" y2="364.5" stroke="#8e8e8e" stroke-width="0.7" stroke-dasharray="1 0.5"/><text x="840" y="371.10" text-anchor="middle" font-family="Liberation Sans" font-size="6.2" fill="#222">00:00:18</text><line x1="840" y1="362.0" x2="840" y2="364.5" stroke="#222" stroke-width="0.9"/><line x1="900" y1="239.5" x2="900" y2="364.5" stroke="#8e8e8e" stroke-width="0.7" stroke-dasharray="1 0.5"/><text x="900" y="371.10" text-anchor="middle" font-family="Liberation Sans" font-size="6.2" fill="#222">00:00:20</text><line x1="900" y1="362.0" x2="900" y2="364.5" stroke="#222" stroke-width="0.9"/><line x1="707.5" y1="240.50" x2="708.7" y2="240.50" stroke="#222" stroke-width="0.7"/><line x1="946.8" y1="240.50" x2="948" y2="240.50" stroke="#222" stroke-width="0.7"/><line x1="707.5" y1="245.05" x2="708.7" y2="245.05" stroke="#222" stroke-width="0.7"/><line x1="946.8" y1="245.05" x2="948" y2="245.05" stroke="#222" stroke-width="0.7"/><line x1="707.5" y1="249.60" x2="708.7" y2="249.60" stroke="#222" stroke-width="0.7"/><line x1="946.8" y1="249.60" x2="948" y2="249.60" stroke="#222" stroke-width="0.7"/><line x1="707.5" y1="254.15" x2="708.7" y2="254.15" stroke="#222" stroke-width="0.7"/><line x1="946.8" y1="254.15" x2="948" y2="254.15" stroke="#222" stroke-width="0.7"/><line x1="707.5" y1="258.70" x2="708.7" y2="258.70" stroke="#222" stroke-width="0.7"/><line x1="946.8" y1="258.70" x2="948" y2="258.70" stroke="#222" stroke-width="0.7"/><line x1="707.5" y1="263.25" x2="708.7" y2="263.25" stroke="#222" stroke-width="0.7"/><line x1="946.8" y1="263.25" x2="948" y2="263.25" stroke="#222" stroke-width="0.7"/><line x1="707.5" y1="267.80" x2="708.7" y2="267.80" stroke="#222" stroke-width="0.7"/><line x1="946.8" y1="267.80" x2="948" y2="267.80" stroke="#222" stroke-width="0.7"/><line x1="707.5" y1="272.35" x2="708.7" y2="272.35" stroke="#222" stroke-width="0.7"/><line x1="946.8" y1="272.35" x2="948" y2="272.35" stroke="#222" stroke-width="0.7"/><line x1="707.5" y1="276.90" x2="708.7" y2="276.90" stroke="#222" stroke-width="0.7"/><line x1="946.8" y1="276.90" x2="948" y2="276.90" stroke="#222" stroke-width="0.7"/><line x1="707.5" y1="281.45" x2="708.7" y2="281.45" stroke="#222" stroke-width="0.7"/><line x1="946.8" y1="281.45" x2="948" y2="281.45" stroke="#222" stroke-width="0.7"/><line x1="707.5" y1="286.00" x2="708.7" y2="286.00" stroke="#222" stroke-width="0.7"/><line x1="946.8" y1="286.00" x2="948" y2="286.00" stroke="#222" stroke-width="0.7"/><line x1="707.5" y1="290.55" x2="708.7" y2="290.55" stroke="#222" stroke-width="0.7"/><line x1="946.8" y1="290.55" x2="948" y2="290.55" stroke="#222" stroke-width="0.7"/><line x1="707.5" y1="295.10" x2="708.7" y2="295.10" stroke="#222" stroke-width="0.7"/><line x1="946.8" y1="295.10" x2="948" y2="295.10" stroke="#222" stroke-width="0.7"/><line x1="707.5" y1="299.65" x2="708.7" y2="299.65" stroke="#222" stroke-width="0.7"/><line x1="946.8" y1="299.65" x2="948" y2="299.65" stroke="#222" stroke-width="0.7"/><line x1="707.5" y1="304.20" x2="708.7" y2="304.20" stroke="#222" stroke-width="0.7"/><line x1="946.8" y1="304.20" x2="948" y2="304.20" stroke="#222" stroke-width="0.7"/><line x1="707.5" y1="308.75" x2="708.7" y2="308.75" stroke="#222" stroke-width="0.7"/><line x1="946.8" y1="308.75" x2="948" y2="308.75" stroke="#222" stroke-width="0.7"/><line x1="707.5" y1="313.30" x2="708.7" y2="313.30" stroke="#222" stroke-width="0.7"/><line x1="946.8" y1="313.30" x2="948" y2="313.30" stroke="#222" stroke-width="0.7"/><line x1="707.5" y1="317.85" x2="708.7" y2="317.85" stroke="#222" stroke-width="0.7"/><line x1="946.8" y1="317.85" x2="948" y2="317.85" stroke="#222" stroke-width="0.7"/><line x1="707.5" y1="322.40" x2="708.7" y2="322.40" stroke="#222" stroke-width="0.7"/><line x1="946.8" y1="322.40" x2="948" y2="322.40" stroke="#222" stroke-width="0.7"/><line x1="707.5" y1="326.95" x2="708.7" y2="326.95" stroke="#222" stroke-width="0.7"/><line x1="946.8" y1="326.95" x2="948" y2="326.95" stroke="#222" stroke-width="0.7"/><line x1="707.5" y1="331.50" x2="708.7" y2="331.50" stroke="#222" stroke-width="0.7"/><line x1="946.8" y1="331.50" x2="948" y2="331.50" stroke="#222" stroke-width="0.7"/><line x1="707.5" y1="336.05" x2="708.7" y2="336.05" stroke="#222" stroke-width="0.7"/><line x1="946.8" y1="336.05" x2="948" y2="336.05" stroke="#222" stroke-width="0.7"/><line x1="707.5" y1="340.60" x2="708.7" y2="340.60" stroke="#222" stroke-width="0.7"/><line x1="946.8" y1="340.60" x2="948" y2="340.60" stroke="#222" stroke-width="0.7"/><line x1="707.5" y1="345.15" x2="708.7" y2="345.15" stroke="#222" stroke-width="0.7"/><line x1="946.8" y1="345.15" x2="948" y2="345.15" stroke="#222" stroke-width="0.7"/><line x1="707.5" y1="349.70" x2="708.7" y2="349.70" stroke="#222" stroke-width="0.7"/><line x1="946.8" y1="349.70" x2="948" y2="349.70" stroke="#222" stroke-width="0.7"/><line x1="707.5" y1="354.25" x2="708.7" y2="354.25" stroke="#222" stroke-width="0.7"/><line x1="946.8" y1="354.25" x2="948" y2="354.25" stroke="#222" stroke-width="0.7"/><line x1="707.5" y1="358.80" x2="708.7" y2="358.80" stroke="#222" stroke-width="0.7"/><line x1="946.8" y1="358.80" x2="948" y2="358.80" stroke="#222" stroke-width="0.7"/><line x1="707.5" y1="363.35" x2="708.7" y2="363.35" stroke="#222" stroke-width="0.7"/><line x1="946.8" y1="363.35" x2="948" y2="363.35" stroke="#222" stroke-width="0.7"/><line x1="708.50" y1="363.3" x2="708.50" y2="364.5" stroke="#222" stroke-width="0.7"/><line x1="723.70" y1="363.3" x2="723.70" y2="364.5" stroke="#222" stroke-width="0.7"/><line x1="738.90" y1="363.3" x2="738.90" y2="364.5" stroke="#222" stroke-width="0.7"/><line x1="754.10" y1="363.3" x2="754.10" y2="364.5" stroke="#222" stroke-width="0.7"/><line x1="769.30" y1="363.3" x2="769.30" y2="364.5" stroke="#222" stroke-width="0.7"/><line x1="784.50" y1="363.3" x2="784.50" y2="364.5" stroke="#222" stroke-width="0.7"/><line x1="799.70" y1="363.3" x2="799.70" y2="364.5" stroke="#222" stroke-width="0.7"/><line x1="814.90" y1="363.3" x2="814.90" y2="364.5" stroke="#222" stroke-width="0.7"/><line x1="830.10" y1="363.3" x2="830.10" y2="364.5" stroke="#222" stroke-width="0.7"/><line x1="845.30" y1="363.3" x2="845.30" y2="364.5" stroke="#222" stroke-width="0.7"/><line x1="860.50" y1="363.3" x2="860.50" y2="364.5" stroke="#222" stroke-width="0.7"/><line x1="875.70" y1="363.3" x2="875.70" y2="364.5" stroke="#222" stroke-width="0.7"/><line x1="890.90" y1="363.3" x2="890.90" y2="364.5" stroke="#222" stroke-width="0.7"/><line x1="906.10" y1="363.3" x2="906.10" y2="364.5" stroke="#222" stroke-width="0.7"/><line x1="921.30" y1="363.3" x2="921.30" y2="364.5" stroke="#222" stroke-width="0.7"/><line x1="936.50" y1="363.3" x2="936.50" y2="364.5" stroke="#222" stroke-width="0.7"/><path d="M707.5 239.5 V364.5 H948 M948 239.5 V364.5" fill="none" stroke="#333" stroke-width="0.9"/><polyline points="707.2,264.9 712.4,267.9 716.3,265.6 720.2,262.7 722.8,263.7 725.4,266.6 727.3,264.3 730.6,266.6 733.8,264.0 737.7,264.3 742.9,262.3 748.1,261.4 752.0,260.1 757.2,260.7 761.1,260.1 763.7,263.6 768.9,262.7 772.8,265.3 779.3,264.0 783.9,265.3 788.4,271.4 793.0,270.5 797.5,277.3 800.8,276.3 803.4,277.6 807.9,273.7 811.8,270.1 818.3,270.1 822.2,271.8 825.5,276.0 827.6,274.4 829.6,276.6 834.8,273.7 836.7,286.7 839.3,282.2 844.5,275.3 847.1,276.6 850.4,274.4 853.6,274.4 857.5,273.1 861.4,274.4 863.4,277.4 866.6,275.7 874.4,273.7 880.9,270.5 890.0,269.2 896.5,267.5 906.9,265.9 918.6,266.3 923.8,264.6 932.9,263.7 940.7,264.0 944.0,265.0 947.9,264.0" fill="none" stroke="#22cc22" stroke-width="1.3" stroke-linejoin="round"/><path d="M948.5 264.0 L955 260.5 L955 267.5 Z" fill="#22cc22"/><rect x="955.5" y="260.5" width="29" height="7" fill="#fff" stroke="#22cc22" stroke-width="1"/><text x="956.5" y="266.3" font-family="Liberation Mono" font-size="6.2" fill="#222" letter-spacing="-0.3">21989.00</text><rect x="683.5" y="386.5" width="313" height="150" fill="none" stroke="#dadada" stroke-width="1"/><rect x="686" y="390" width="308" height="144" fill="#ffffff"/><rect x="687" y="382" width="31" height="8" fill="#f0f0f0"/><text x="688" y="389" font-family="Liberation Sans" font-size="6.25" letter-spacing="0.3" font-weight="600" fill="#333">面积(cm²)</text><text x="701.0" y="525.60" text-anchor="end" font-family="Liberation Sans" font-size="6.2" letter-spacing="-0.15" fill="#222">0.00</text><text x="957.5" y="525.60" font-family="Liberation Sans" font-size="6.2" fill="#222">0</text><line x1="704.5" y1="523.40" x2="706.5" y2="523.40" stroke="#222" stroke-width="0.9"/><line x1="952.5" y1="523.40" x2="954.5" y2="523.40" stroke="#222" stroke-width="0.9"/><line x1="704.5" y1="500.65" x2="954.5" y2="500.65" stroke="#8e8e8e" stroke-width="0.7" stroke-dasharray="1 0.5"/><text x="701.0" y="502.85" text-anchor="end" font-family="Liberation Sans" font-size="6.2" letter-spacing="-0.15" fill="#222">0.50</text><text x="957.5" y="502.85" font-family="Liberation Sans" font-size="6.2" fill="#222">0.5</text><line x1="704.5" y1="500.65" x2="706.5" y2="500.65" stroke="#222" stroke-width="0.9"/><line x1="952.5" y1="500.65" x2="954.5" y2="500.65" stroke="#222" stroke-width="0.9"/><line x1="704.5" y1="477.90" x2="954.5" y2="477.90" stroke="#8e8e8e" stroke-width="0.7" stroke-dasharray="1 0.5"/><text x="701.0" y="480.10" text-anchor="end" font-family="Liberation Sans" font-size="6.2" letter-spacing="-0.15" fill="#222">1.00</text><text x="957.5" y="480.10" font-family="Liberation Sans" font-size="6.2" fill="#222">1</text><line x1="704.5" y1="477.90" x2="706.5" y2="477.90" stroke="#222" stroke-width="0.9"/><line x1="952.5" y1="477.90" x2="954.5" y2="477.90" stroke="#222" stroke-width="0.9"/><line x1="704.5" y1="455.15" x2="954.5" y2="455.15" stroke="#8e8e8e" stroke-width="0.7" stroke-dasharray="1 0.5"/><text x="701.0" y="457.35" text-anchor="end" font-family="Liberation Sans" font-size="6.2" letter-spacing="-0.15" fill="#222">1.50</text><text x="957.5" y="457.35" font-family="Liberation Sans" font-size="6.2" fill="#222">1.5</text><line x1="704.5" y1="455.15" x2="706.5" y2="455.15" stroke="#222" stroke-width="0.9"/><line x1="952.5" y1="455.15" x2="954.5" y2="455.15" stroke="#222" stroke-width="0.9"/><line x1="704.5" y1="432.40" x2="954.5" y2="432.40" stroke="#8e8e8e" stroke-width="0.7" stroke-dasharray="1 0.5"/><text x="701.0" y="434.60" text-anchor="end" font-family="Liberation Sans" font-size="6.2" letter-spacing="-0.15" fill="#222">2.00</text><text x="957.5" y="434.60" font-family="Liberation Sans" font-size="6.2" fill="#222">2</text><line x1="704.5" y1="432.40" x2="706.5" y2="432.40" stroke="#222" stroke-width="0.9"/><line x1="952.5" y1="432.40" x2="954.5" y2="432.40" stroke="#222" stroke-width="0.9"/><line x1="704.5" y1="409.65" x2="954.5" y2="409.65" stroke="#8e8e8e" stroke-width="0.7" stroke-dasharray="1 0.5"/><text x="701.0" y="411.85" text-anchor="end" font-family="Liberation Sans" font-size="6.2" letter-spacing="-0.15" fill="#222">2.50</text><text x="957.5" y="411.85" font-family="Liberation Sans" font-size="6.2" fill="#222">2.5</text><line x1="704.5" y1="409.65" x2="706.5" y2="409.65" stroke="#222" stroke-width="0.9"/><line x1="952.5" y1="409.65" x2="954.5" y2="409.65" stroke="#222" stroke-width="0.9"/><line x1="716.5" y1="398" x2="716.5" y2="523.4" stroke="#8e8e8e" stroke-width="0.7" stroke-dasharray="1 0.5"/><text x="716.5" y="530.00" text-anchor="middle" font-family="Liberation Sans" font-size="6.2" fill="#222">00:00:14</text><line x1="716.5" y1="520.9" x2="716.5" y2="523.4" stroke="#222" stroke-width="0.9"/><line x1="779.5" y1="398" x2="779.5" y2="523.4" stroke="#8e8e8e" stroke-width="0.7" stroke-dasharray="1 0.5"/><text x="779.5" y="530.00" text-anchor="middle" font-family="Liberation Sans" font-size="6.2" fill="#222">00:00:16</text><line x1="779.5" y1="520.9" x2="779.5" y2="523.4" stroke="#222" stroke-width="0.9"/><line x1="842" y1="398" x2="842" y2="523.4" stroke="#8e8e8e" stroke-width="0.7" stroke-dasharray="1 0.5"/><text x="842" y="530.00" text-anchor="middle" font-family="Liberation Sans" font-size="6.2" fill="#222">00:00:18</text><line x1="842" y1="520.9" x2="842" y2="523.4" stroke="#222" stroke-width="0.9"/><line x1="904.5" y1="398" x2="904.5" y2="523.4" stroke="#8e8e8e" stroke-width="0.7" stroke-dasharray="1 0.5"/><text x="904.5" y="530.00" text-anchor="middle" font-family="Liberation Sans" font-size="6.2" fill="#222">00:00:20</text><line x1="904.5" y1="520.9" x2="904.5" y2="523.4" stroke="#222" stroke-width="0.9"/><line x1="704.5" y1="399.00" x2="705.7" y2="399.00" stroke="#222" stroke-width="0.7"/><line x1="953.3" y1="399.00" x2="954.5" y2="399.00" stroke="#222" stroke-width="0.7"/><line x1="704.5" y1="403.55" x2="705.7" y2="403.55" stroke="#222" stroke-width="0.7"/><line x1="953.3" y1="403.55" x2="954.5" y2="403.55" stroke="#222" stroke-width="0.7"/><line x1="704.5" y1="408.10" x2="705.7" y2="408.10" stroke="#222" stroke-width="0.7"/><line x1="953.3" y1="408.10" x2="954.5" y2="408.10" stroke="#222" stroke-width="0.7"/><line x1="704.5" y1="412.65" x2="705.7" y2="412.65" stroke="#222" stroke-width="0.7"/><line x1="953.3" y1="412.65" x2="954.5" y2="412.65" stroke="#222" stroke-width="0.7"/><line x1="704.5" y1="417.20" x2="705.7" y2="417.20" stroke="#222" stroke-width="0.7"/><line x1="953.3" y1="417.20" x2="954.5" y2="417.20" stroke="#222" stroke-width="0.7"/><line x1="704.5" y1="421.75" x2="705.7" y2="421.75" stroke="#222" stroke-width="0.7"/><line x1="953.3" y1="421.75" x2="954.5" y2="421.75" stroke="#222" stroke-width="0.7"/><line x1="704.5" y1="426.30" x2="705.7" y2="426.30" stroke="#222" stroke-width="0.7"/><line x1="953.3" y1="426.30" x2="954.5" y2="426.30" stroke="#222" stroke-width="0.7"/><line x1="704.5" y1="430.85" x2="705.7" y2="430.85" stroke="#222" stroke-width="0.7"/><line x1="953.3" y1="430.85" x2="954.5" y2="430.85" stroke="#222" stroke-width="0.7"/><line x1="704.5" y1="435.40" x2="705.7" y2="435.40" stroke="#222" stroke-width="0.7"/><line x1="953.3" y1="435.40" x2="954.5" y2="435.40" stroke="#222" stroke-width="0.7"/><line x1="704.5" y1="439.95" x2="705.7" y2="439.95" stroke="#222" stroke-width="0.7"/><line x1="953.3" y1="439.95" x2="954.5" y2="439.95" stroke="#222" stroke-width="0.7"/><line x1="704.5" y1="444.50" x2="705.7" y2="444.50" stroke="#222" stroke-width="0.7"/><line x1="953.3" y1="444.50" x2="954.5" y2="444.50" stroke="#222" stroke-width="0.7"/><line x1="704.5" y1="449.05" x2="705.7" y2="449.05" stroke="#222" stroke-width="0.7"/><line x1="953.3" y1="449.05" x2="954.5" y2="449.05" stroke="#222" stroke-width="0.7"/><line x1="704.5" y1="453.60" x2="705.7" y2="453.60" stroke="#222" stroke-width="0.7"/><line x1="953.3" y1="453.60" x2="954.5" y2="453.60" stroke="#222" stroke-width="0.7"/><line x1="704.5" y1="458.15" x2="705.7" y2="458.15" stroke="#222" stroke-width="0.7"/><line x1="953.3" y1="458.15" x2="954.5" y2="458.15" stroke="#222" stroke-width="0.7"/><line x1="704.5" y1="462.70" x2="705.7" y2="462.70" stroke="#222" stroke-width="0.7"/><line x1="953.3" y1="462.70" x2="954.5" y2="462.70" stroke="#222" stroke-width="0.7"/><line x1="704.5" y1="467.25" x2="705.7" y2="467.25" stroke="#222" stroke-width="0.7"/><line x1="953.3" y1="467.25" x2="954.5" y2="467.25" stroke="#222" stroke-width="0.7"/><line x1="704.5" y1="471.80" x2="705.7" y2="471.80" stroke="#222" stroke-width="0.7"/><line x1="953.3" y1="471.80" x2="954.5" y2="471.80" stroke="#222" stroke-width="0.7"/><line x1="704.5" y1="476.35" x2="705.7" y2="476.35" stroke="#222" stroke-width="0.7"/><line x1="953.3" y1="476.35" x2="954.5" y2="476.35" stroke="#222" stroke-width="0.7"/><line x1="704.5" y1="480.90" x2="705.7" y2="480.90" stroke="#222" stroke-width="0.7"/><line x1="953.3" y1="480.90" x2="954.5" y2="480.90" stroke="#222" stroke-width="0.7"/><line x1="704.5" y1="485.45" x2="705.7" y2="485.45" stroke="#222" stroke-width="0.7"/><line x1="953.3" y1="485.45" x2="954.5" y2="485.45" stroke="#222" stroke-width="0.7"/><line x1="704.5" y1="490.00" x2="705.7" y2="490.00" stroke="#222" stroke-width="0.7"/><line x1="953.3" y1="490.00" x2="954.5" y2="490.00" stroke="#222" stroke-width="0.7"/><line x1="704.5" y1="494.55" x2="705.7" y2="494.55" stroke="#222" stroke-width="0.7"/><line x1="953.3" y1="494.55" x2="954.5" y2="494.55" stroke="#222" stroke-width="0.7"/><line x1="704.5" y1="499.10" x2="705.7" y2="499.10" stroke="#222" stroke-width="0.7"/><line x1="953.3" y1="499.10" x2="954.5" y2="499.10" stroke="#222" stroke-width="0.7"/><line x1="704.5" y1="503.65" x2="705.7" y2="503.65" stroke="#222" stroke-width="0.7"/><line x1="953.3" y1="503.65" x2="954.5" y2="503.65" stroke="#222" stroke-width="0.7"/><line x1="704.5" y1="508.20" x2="705.7" y2="508.20" stroke="#222" stroke-width="0.7"/><line x1="953.3" y1="508.20" x2="954.5" y2="508.20" stroke="#222" stroke-width="0.7"/><line x1="704.5" y1="512.75" x2="705.7" y2="512.75" stroke="#222" stroke-width="0.7"/><line x1="953.3" y1="512.75" x2="954.5" y2="512.75" stroke="#222" stroke-width="0.7"/><line x1="704.5" y1="517.30" x2="705.7" y2="517.30" stroke="#222" stroke-width="0.7"/><line x1="953.3" y1="517.30" x2="954.5" y2="517.30" stroke="#222" stroke-width="0.7"/><line x1="704.5" y1="521.85" x2="705.7" y2="521.85" stroke="#222" stroke-width="0.7"/><line x1="953.3" y1="521.85" x2="954.5" y2="521.85" stroke="#222" stroke-width="0.7"/><line x1="705.50" y1="522.1999999999999" x2="705.50" y2="523.4" stroke="#222" stroke-width="0.7"/><line x1="720.70" y1="522.1999999999999" x2="720.70" y2="523.4" stroke="#222" stroke-width="0.7"/><line x1="735.90" y1="522.1999999999999" x2="735.90" y2="523.4" stroke="#222" stroke-width="0.7"/><line x1="751.10" y1="522.1999999999999" x2="751.10" y2="523.4" stroke="#222" stroke-width="0.7"/><line x1="766.30" y1="522.1999999999999" x2="766.30" y2="523.4" stroke="#222" stroke-width="0.7"/><line x1="781.50" y1="522.1999999999999" x2="781.50" y2="523.4" stroke="#222" stroke-width="0.7"/><line x1="796.70" y1="522.1999999999999" x2="796.70" y2="523.4" stroke="#222" stroke-width="0.7"/><line x1="811.90" y1="522.1999999999999" x2="811.90" y2="523.4" stroke="#222" stroke-width="0.7"/><line x1="827.10" y1="522.1999999999999" x2="827.10" y2="523.4" stroke="#222" stroke-width="0.7"/><line x1="842.30" y1="522.1999999999999" x2="842.30" y2="523.4" stroke="#222" stroke-width="0.7"/><line x1="857.50" y1="522.1999999999999" x2="857.50" y2="523.4" stroke="#222" stroke-width="0.7"/><line x1="872.70" y1="522.1999999999999" x2="872.70" y2="523.4" stroke="#222" stroke-width="0.7"/><line x1="887.90" y1="522.1999999999999" x2="887.90" y2="523.4" stroke="#222" stroke-width="0.7"/><line x1="903.10" y1="522.1999999999999" x2="903.10" y2="523.4" stroke="#222" stroke-width="0.7"/><line x1="918.30" y1="522.1999999999999" x2="918.30" y2="523.4" stroke="#222" stroke-width="0.7"/><line x1="933.50" y1="522.1999999999999" x2="933.50" y2="523.4" stroke="#222" stroke-width="0.7"/><line x1="948.70" y1="522.1999999999999" x2="948.70" y2="523.4" stroke="#222" stroke-width="0.7"/><path d="M704.5 398 V523.4 H954.5 M954.5 398 V523.4" fill="none" stroke="#333" stroke-width="0.9"/><polyline points="704.6,423.2 709.1,423.9 711.7,425.4 713.7,423.9 716.3,425.4 720.8,425.2 724.1,422.6 727.3,420.6 732.5,423.2 739.0,422.2 741.0,421.3 742.9,422.3 746.8,420.9 761.1,420.9 763.7,421.6 770.2,420.6 774.1,418.0 783.2,418.0 788.4,420.9 791.7,421.9 793.6,427.1 798.2,433.3 801.4,432.3 804.7,434.6 807.9,431.7 811.8,430.4 817.0,430.4 822.9,429.7 826.1,435.2 828.3,431.7 830.2,433.0 832.2,431.7 834.8,433.9 836.7,433.9 838.7,436.2 841.9,431.0 844.5,430.0 846.5,427.1 849.1,430.7 853.6,427.8 858.8,425.8 862.7,424.8 866.6,423.2 870.5,424.5 874.4,424.8 877.0,423.9 881.6,426.8 884.8,425.2 890.0,422.9 893.9,422.9 898.5,428.4 904.3,428.4 908.2,428.1 913.4,426.1 916.0,426.5 918.6,425.5 929.0,425.5 931.0,426.5 932.9,425.8 938.1,427.1 940.7,425.2 944.6,426.8 947.9,425.5 951.1,427.4 954.3,426.5" fill="none" stroke="#22cc22" stroke-width="1.3" stroke-linejoin="round"/><path d="M955.0 426.5 L961.5 423.0 L961.5 430.0 Z" fill="#22cc22"/><rect x="962.0" y="423.0" width="16.5" height="7" fill="#fff" stroke="#22cc22" stroke-width="1"/><text x="963.0" y="428.8" font-family="Liberation Mono" font-size="6.2" fill="#222" letter-spacing="-0.3">2.12</text></svg><svg class="a" style="left:0;top:14px" width="600" height="18" viewBox="0 14 600 18"><rect x="1" y="17" width="1" height="1" fill="#b8b8b8"/><rect x="1" y="19" width="1" height="1" fill="#b8b8b8"/><rect x="1" y="21" width="1" height="1" fill="#b8b8b8"/><rect x="1" y="23" width="1" height="1" fill="#b8b8b8"/><rect x="1" y="25" width="1" height="1" fill="#b8b8b8"/><rect x="1" y="27" width="1" height="1" fill="#b8b8b8"/><rect x="1" y="29" width="1" height="1" fill="#b8b8b8"/><rect x="7.2" y="18.2" width="10" height="10" rx="1.8" fill="#fff" stroke="#737373" stroke-width="1.3"/><path d="M12.2 20.3v6M9.2 23.3h6" stroke="#3c9c3c" stroke-width="1.6"/><path d="M23.8 20 Q23.8 17.6 26 17.6 H32 Q34.2 17.6 34.2 20 V27 Q34.2 28.6 32.6 28.6 H25.4 Q23.8 28.6 23.8 27 Z" fill="#fff" stroke="#737373" stroke-width="1.2"/><path d="M24.4 19.5 Q24.6 18.2 26 18.2 H32 Q33.4 18.2 33.6 19.5 L33.6 20.6 H24.4 Z" fill="#8a8a8a"/><path d="M26.6 22l4.6 4.6M31.2 22l-4.6 4.6" stroke="#e05040" stroke-width="1"/><rect x="37.5" y="17" width="1" height="12" fill="#d6d6d6"/><rect x="154" y="17" width="1" height="12" fill="#d6d6d6"/><rect x="243" y="17" width="1" height="12" fill="#d6d6d6"/><rect x="277" y="17" width="1" height="12" fill="#d6d6d6"/><rect x="329" y="17" width="1" height="12" fill="#d6d6d6"/><rect x="413" y="17" width="1" height="12" fill="#d6d6d6"/><rect x="514" y="17" width="1" height="12" fill="#d6d6d6"/><path d="M44 23.2 L48 19.6 V26.8 Z M48 23.2 L52 19.6 V26.8 Z" fill="#7a7a7a"/><path d="M61 23.2 L66.5 19.6 V26.8 Z" fill="#7a7a7a"/><path d="M77.5 19.6 V26.8" stroke="#7a7a7a" stroke-width="1.2"/><path d="M78.5 23.2 L84 19.6 V26.8 Z" fill="#7a7a7a"/><circle cx="97" cy="23.2" r="5.3" fill="none" stroke="#7a7a7a" stroke-width="1.1"/><rect x="95.1" y="21.3" width="3.8" height="3.8" fill="#7a7a7a"/><path d="M115.8 19.6 V26.8" stroke="#7a7a7a" stroke-width="1.2"/><path d="M114.8 23.2 L109.3 19.6 V26.8 Z" fill="#7a7a7a"/><path d="M133 23.2 L127.5 19.6 V26.8 Z" fill="#7a7a7a"/><path d="M150 23.2 L146 19.6 V26.8 Z M146 23.2 L142 19.6 V26.8 Z" fill="#7a7a7a"/><rect x="162.6" y="18" width="4" height="6.5" rx="2" fill="#2a8ae0"/><path d="M164.6 24 V29" stroke="#2a8ae0" stroke-width="1"/><circle cx="164.6" cy="20.6" r="0.6" fill="#fff"/><circle cx="164.6" cy="22.4" r="0.6" fill="#fff"/><path d="M177 21.5 H183.5 Q186 21.5 186 23.2 Q186 25 183.5 25 H177 Q174.8 25 174.8 23.2 Q174.8 21.5 177 21.5 Z" fill="none" stroke="#555" stroke-width="1.1"/><path d="M178.5 20.2 L180.3 22 L182 20.2 M178.5 26.3 L180.3 24.5 L182 26.3" stroke="#e04040" stroke-width="0.8" fill="none"/><rect x="177.5" y="22.3" width="5.5" height="1.9" fill="#f0f0f0"/><rect x="194.3" y="19.8" width="9" height="7" rx="1" fill="none" stroke="#8a8a8a" stroke-width="1.1"/><path d="M203.3 21.5 L206 20.5 V26 L203.3 25" fill="none" stroke="#8a8a8a" stroke-width="1"/><path d="M197.6 21.6 L200.2 23.3 L197.6 25 Z" fill="#8a8a8a"/><rect x="210.3" y="19.8" width="9" height="7" rx="1" fill="none" stroke="#777" stroke-width="1.1"/><path d="M219.3 21.5 L222 20.5 V26 L219.3 25" fill="none" stroke="#777" stroke-width="1"/><path d="M212 21.2 L217.6 25.2" stroke="#e03050" stroke-width="1"/><path d="M227.5 21 V19 H238.5 V21 M227.5 25.5 V27.5 H238.5 V25.5" fill="none" stroke="#666" stroke-width="1.1"/><text x="229.3" y="25.3" font-family="Liberation Sans" font-size="4.8" font-weight="bold" fill="#2a8ae0">NPY</text><circle cx="228.3" cy="27.3" r="1" fill="#2a8ae0"/><rect x="247.5" y="18" width="9" height="2.3" fill="#e82020"/><rect x="247.5" y="20.3" width="9" height="2.2" fill="#ffb000"/><rect x="247.5" y="22.5" width="9" height="2.2" fill="#f0e000"/><rect x="247.5" y="24.7" width="9" height="2.2" fill="#20b040"/><rect x="247.5" y="26.9" width="9" height="2.1" fill="#2060c0"/><path d="M264 21 L266.5 18.5 H269.5 L272 21 V28.5 H264 Z" fill="none" stroke="#8a8a8a" stroke-width="1"/><rect x="265.5" y="22" width="5" height="5.5" fill="#8ab8e8"/><path d="M290.8 20.4 A4.6 4.6 0 1 0 291.8 25" fill="none" stroke="#6a6a6a" stroke-width="1.2"/><path d="M292.2 18.5 V22 H288.7 Z" fill="#6a6a6a"/><path d="M301 21.3 H307.5 M305 19.3 L307.5 21.3 L305 23.3" fill="none" stroke="#555" stroke-width="1.2"/><path d="M307 25.2 H299 M301.8 23.2 L299 25.2 L301.8 27.2" fill="none" stroke="#2a8ae0" stroke-width="1.2"/><path d="M317.3 26 V19 M315.3 21 L317.3 19 L319.3 21" fill="none" stroke="#555" stroke-width="1.1"/><path d="M321.5 20.5 V28 M319.5 26 L321.5 28 L323.5 26" fill="none" stroke="#2a8ae0" stroke-width="1.2"/><circle cx="339.3" cy="23.2" r="5.4" fill="none" stroke="#555" stroke-width="1.1"/><circle cx="339.3" cy="23.2" r="3.6" fill="#1a80e8"/><path d="M338.2 21.4 L341.2 23.2 L338.2 25 Z" fill="#fff"/><circle cx="355.5" cy="23.2" r="5.3" fill="none" stroke="#8a8a8a" stroke-width="1"/><circle cx="355.5" cy="23.2" r="3.3" fill="none" stroke="#8a8a8a" stroke-width="1"/><rect x="353.8" y="22.5" width="3.4" height="1.4" fill="#8a8a8a"/><path d="M368.5 18 L374.5 26 M375 18 L369 26" stroke="#555" stroke-width="1"/><circle cx="368.8" cy="27" r="1.5" fill="none" stroke="#555" stroke-width="0.9"/><circle cx="374.6" cy="27" r="1.5" fill="none" stroke="#555" stroke-width="0.9"/><path d="M387.5 20 H384 V28 H392.5 V25" fill="none" stroke="#666" stroke-width="1.1"/><path d="M386.5 26 Q387 21.5 391 21.3 V19.5 L394 22.2 L391 24.8 V23.2 Q388.5 23.3 386.5 26 Z" fill="#1a9a30"/><path d="M401.8 19 V26.3 H408.5 M400 21 H406.3 V28" fill="none" stroke="#8a8a8a" stroke-width="1"/><rect x="419.5" y="19" width="9" height="8.6" rx="1" fill="#d8d8d8" stroke="#999" stroke-width="0.8"/><rect x="421.3" y="20.5" width="2.2" height="5.6" fill="#1a7ae0"/><rect x="424.5" y="20.5" width="2.2" height="5.6" fill="#1a7ae0"/><rect x="435.5" y="19" width="9" height="8.6" rx="1" fill="#d8d8d8" stroke="#999" stroke-width="0.8"/><rect x="437" y="20.5" width="1.7" height="5.6" fill="#1a7ae0"/><rect x="439.2" y="20.5" width="1.7" height="5.6" fill="#1a7ae0"/><rect x="441.4" y="20.5" width="1.7" height="5.6" fill="#1a7ae0"/><path d="M452.5 27.5 V20 H459.5" fill="none" stroke="#2a8ae0" stroke-width="1.2"/><path d="M459.5 19 V27.5 H452" fill="none" stroke="#555" stroke-width="1.1"/><rect x="467.3" y="19.2" width="10" height="7" rx="1.5" fill="#cfcfcf" stroke="#777" stroke-width="0.9"/><path d="M469 23.5 H472 M473 22.5 H476" stroke="#2a8ae0" stroke-width="1"/><path d="M470.5 28 H474" stroke="#777" stroke-width="1"/><path d="M483.5 19.5 H490.5 M483.5 21.5 H490.5 M483.5 23.5 H490.5 M483.5 25.5 H490.5 M483.5 27.5 H490.5" stroke="#3a8ad0" stroke-width="0.9"/><path d="M492.8 28 V19.5 M491.5 21 L492.8 19.5 L494 21" fill="none" stroke="#555" stroke-width="0.9"/><rect x="500" y="19" width="9.5" height="9" fill="#1a70c8"/><rect x="500.7" y="19.7" width="2.3" height="2.2" fill="#5ab0f0"/><rect x="500.7" y="22.55" width="2.3" height="2.2" fill="#5ab0f0"/><rect x="500.7" y="25.4" width="2.3" height="2.2" fill="#5ab0f0"/><rect x="503.7" y="19.7" width="2.3" height="2.2" fill="#5ab0f0"/><rect x="503.7" y="22.55" width="2.3" height="2.2" fill="#5ab0f0"/><rect x="503.7" y="25.4" width="2.3" height="2.2" fill="#5ab0f0"/><rect x="506.7" y="19.7" width="2.3" height="2.2" fill="#5ab0f0"/><rect x="506.7" y="22.55" width="2.3" height="2.2" fill="#5ab0f0"/><rect x="506.7" y="25.4" width="2.3" height="2.2" fill="#5ab0f0"/></svg><div class="t" style="left:520px;top:20.2px;font-size:6.25px;letter-spacing:0.3px;color:#666">文件:0</div><div class="t" style="left:549px;top:20.2px;font-size:6.25px;letter-spacing:0.3px;color:#666">设备:1</div><svg class="a" style="left:19px;top:34px" width="11" height="11"><rect x="0.5" y="0.5" width="9.5" height="9.5" fill="#0a5cb8"/><rect x="1" y="1" width="4.2" height="4.2" fill="#7cc8ff"/><rect x="5.4" y="5.4" width="4.2" height="4.2" fill="#7cc8ff"/><rect x="5.4" y="1" width="4.2" height="4.2" fill="#1a90f0"/><rect x="1" y="5.4" width="4.2" height="4.2" fill="#1a90f0"/></svg><div class="t" style="left:33px;top:36.5px;font-size:6.5px;font-family:'Liberation Mono';color:#cfe4fb;letter-spacing:-0.35px">3330376E3651</div><svg class="a" style="left:78px;top:34px" width="9" height="10"><rect x="0.7" y="1.5" width="7" height="7.5" rx="1.2" fill="none" stroke="#cfe4fb" stroke-width="0.9"/><path d="M3 6.5 L7.5 1.5" stroke="#cfe4fb" stroke-width="1"/></svg><div class="t" style="left:87.5px;top:36.2px;font-size:6.25px;letter-spacing:0.3px;font-weight:600;color:#d0e6fc">实时</div><div class="t" style="left:100.5px;top:36.5px;font-size:6.5px;font-family:'Liberation Mono';color:#cfe4fb;letter-spacing:-0.76px">(S444462-6051:S-40:P-2:I-20)</div><div class="t" style="left:192px;top:36.2px;font-size:6.25px;letter-spacing:0.35px;font-weight:600;color:#d0e6fc">设备:正常</div><div class="t" style="left:223.6px;top:36.2px;font-size:6.25px;letter-spacing:0.35px;font-weight:600;color:#d0e6fc">荷重元:未加载</div><div class="t" style="left:268px;top:36.2px;font-size:6.25px;letter-spacing:0.35px;font-weight:600;color:#d0e6fc">校准:未校准</div><div class="t" style="left:305px;top:36.2px;font-size:6.25px;letter-spacing:0.35px;font-weight:600;color:#d0e6fc">平衡:未平衡</div><div class="t" style="left:343px;top:36.2px;font-size:6.25px;letter-spacing:0.35px;font-weight:600;color:#d0e6fc">调零:未调零</div><svg class="a" style="left:960px;top:33px" width="40" height="12"><circle cx="8.5" cy="6" r="3.3" fill="none" stroke="#9cc8f4" stroke-width="0.9"/><path d="M8.5 5v2.5" stroke="#9cc8f4" stroke-width="0.9"/><rect x="19.5" y="3" width="5.5" height="5.8" rx="0.8" fill="none" stroke="#9cc8f4" stroke-width="0.9"/><path d="M32.5 3.2l5 5M37.5 3.2l-5 5" stroke="#9cc8f4" stroke-width="0.9"/></svg><svg class="a" style="left:0;top:32px" width="17" height="350" viewBox="0 32 17 350"><rect x="2" y="35" width="1" height="1" fill="#b8b8b8"/><rect x="4" y="35" width="1" height="1" fill="#b8b8b8"/><rect x="6" y="35" width="1" height="1" fill="#b8b8b8"/><rect x="8" y="35" width="1" height="1" fill="#b8b8b8"/><rect x="10" y="35" width="1" height="1" fill="#b8b8b8"/><rect x="12" y="35" width="1" height="1" fill="#b8b8b8"/><rect x="14" y="35" width="1" height="1" fill="#b8b8b8"/><rect x="1" y="38" width="15" height="14" fill="#cde2f7"/><rect x="1" y="70" width="15" height="14" fill="#cde2f7"/><rect x="1" y="120" width="15" height="14" fill="#cde2f7"/><rect x="2" y="101" width="13" height="1" fill="#dcdcdc"/><rect x="2" y="137" width="13" height="1" fill="#dcdcdc"/><rect x="2" y="170" width="13" height="1" fill="#dcdcdc"/><rect x="2" y="206" width="13" height="1" fill="#dcdcdc"/><rect x="2" y="240" width="13" height="1" fill="#dcdcdc"/><rect x="2" y="338" width="13" height="1" fill="#dcdcdc"/><rect x="2" y="356" width="13" height="1" fill="#dcdcdc"/><rect x="4.0" y="40.5" width="9" height="9" fill="#1a5cb0"/><rect x="4.7" y="41.2" width="3.7" height="3.7" fill="#50b4f8"/><rect x="8.6" y="45.1" width="3.7" height="3.7" fill="#50b4f8"/><rect x="8.6" y="41.2" width="3.7" height="3.7" fill="#0a66c8"/><rect x="4.7" y="45.1" width="3.7" height="3.7" fill="#0a66c8"/><rect x="4.0" y="56.5" width="9" height="9" fill="#1a5cb0"/><rect x="4.7" y="57.2" width="3.7" height="3.7" fill="#50b4f8"/><rect x="8.6" y="61.1" width="3.7" height="3.7" fill="#50b4f8"/><rect x="8.6" y="57.2" width="3.7" height="3.7" fill="#0a66c8"/><rect x="4.7" y="61.1" width="3.7" height="3.7" fill="#0a66c8"/><path d="M5 72 V80 M6.8 72 V80 M8.6 72 V80 M10.4 72 V80" stroke="#666" stroke-width="1"/><path d="M3.5 81.3 H10.5 L13.5 75" fill="none" stroke="#1a7ae0" stroke-width="1.2"/><path d="M8.5 88 L13.4 91.5 L11.6 97.5 H5.4 L3.6 91.5 Z" fill="none" stroke="#666" stroke-width="1"/><circle cx="8.5" cy="93" r="2.8" fill="#1a7ae0"/><path d="M3 116.5 L5.5 112.8 H14.5 L12 116.5 Z" fill="#d8d8d8" stroke="#666" stroke-width="0.8"/><path d="M5.2 113.8 C6 110 7 106.5 8.7 106.3 C10.4 106.5 11.4 110 12.2 113.8" fill="#fff" stroke="#1a7ae0" stroke-width="1"/><path d="M3 132.5 L5.5 128.8 H14.5 L12 132.5 Z" fill="#bbb" stroke="#555" stroke-width="0.8"/><path d="M5 130 C6 126 7 122.3 8.7 122.2 C10.4 122.3 11.4 126 12.4 130 Z" fill="#1a7ae0"/><text x="3.5" y="146" font-family="Liberation Sans" font-size="4.6" fill="#777">AVG</text><path d="M2.5 151 Q5 147 7 150 T14 150" fill="none" stroke="#777" stroke-width="0.8"/><rect x="2.5" y="157.5" width="11" height="8" fill="none" stroke="#888" stroke-width="0.8"/><text x="3.3" y="163.5" font-family="Liberation Sans" font-size="4.6" fill="#888">AVG</text><circle cx="8.5" cy="180" r="5" fill="none" stroke="#555" stroke-width="1"/><circle cx="8.5" cy="180" r="2" fill="#e01020"/><circle cx="9" cy="194" r="2.5" fill="none" stroke="#888" stroke-width="0.9"/><path d="M3.5 200 Q6 196.5 12 197.5 M3.5 200 Q8 202 14 200" fill="none" stroke="#888" stroke-width="0.9"/><path d="M3.5 218 L12 214 M3.5 219 L12.5 215" stroke="#444" stroke-width="0.9"/><path d="M9.5 210 L13.5 210.5 L12.5 214.5 Z" fill="#1a7ae0"/><circle cx="11.8" cy="211.5" r="2" fill="#1a7ae0"/><defs><linearGradient id="rg" x1="0" y1="0" x2="0" y2="1"><stop offset="0" stop-color="#e01848"/><stop offset="1" stop-color="#ffe8ee"/></linearGradient></defs><rect x="4" y="224.5" width="9" height="11" fill="url(#rg)" stroke="#777" stroke-width="0.8"/><rect x="3.5" y="244.5" width="10" height="9.5" fill="#555"/><rect x="4.3" y="245.3" width="4" height="3.8" fill="#e8c030"/><rect x="8.7" y="245.3" width="4" height="3.8" fill="#40b0e8"/><rect x="4.3" y="249.5" width="4" height="3.8" fill="#40b0e8"/><rect x="8.7" y="249.5" width="4" height="3.8" fill="#e8c030"/><path d="M5 270 L12 262.5 L13.5 264 L6.5 271.5 L4.5 272 Z" fill="none" stroke="#444" stroke-width="0.9"/><path d="M3 259.5 H5.5 M4.2 258.3 V260.7" stroke="#444" stroke-width="0.8"/><path d="M4 286 L13 277" stroke="#444" stroke-width="0.9"/><circle cx="4.3" cy="285.7" r="0.9" fill="#444"/><circle cx="12.7" cy="277.3" r="0.9" fill="#444"/><circle cx="4" cy="276" r="0.7" fill="#444"/><rect x="5.5" y="293.5" width="8" height="6.5" rx="1" fill="none" stroke="#444" stroke-width="0.9"/><circle cx="4" cy="292" r="0.9" fill="#444"/><circle cx="9" cy="313" r="3.8" fill="none" stroke="#444" stroke-width="0.9"/><circle cx="4" cy="308" r="0.9" fill="#444"/><path d="M7 325 H11 L13 328.5 L11 332 H7 L5 328.5 Z" fill="none" stroke="#444" stroke-width="0.9"/><circle cx="4" cy="324" r="0.9" fill="#444"/><path d="M6.5 342 V347 M10.5 342 V347 M5.3 345.5 L6.5 347 L7.7 345.5 M9.3 345.5 L10.5 347 L11.7 345.5" fill="none" stroke="#444" stroke-width="0.9"/><rect x="3.5" y="348" width="10.5" height="2.6" rx="1" fill="none" stroke="#444" stroke-width="0.9"/><path d="M12 361 V360 H4 V370 H12 V369" fill="none" stroke="#666" stroke-width="0.9"/><path d="M6 365 H12.5 M10.5 362.8 L12.8 365 L10.5 367.2" fill="none" stroke="#d02030" stroke-width="1"/></svg></div></body></html>
